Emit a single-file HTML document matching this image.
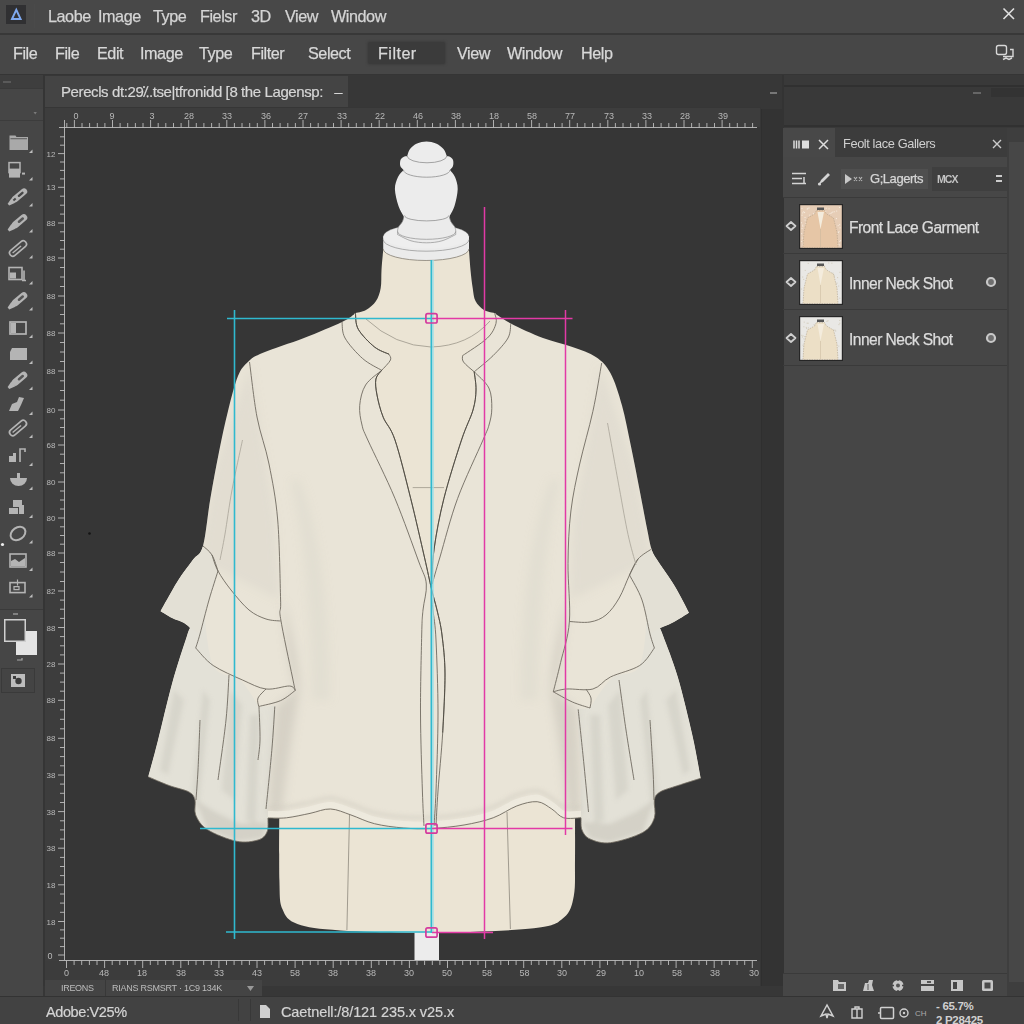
<!DOCTYPE html>
<html><head><meta charset="utf-8">
<style>
*{margin:0;padding:0;box-sizing:border-box}
html,body{width:1024px;height:1024px;overflow:hidden;background:#363636}
body{position:relative;-webkit-font-smoothing:antialiased;font-family:"Liberation Sans",sans-serif;color:#d2d2d2}
.abs{position:absolute}
.t{position:absolute;white-space:nowrap;line-height:1;will-change:transform}
#title{left:0;top:0;width:1024px;height:34px;background:#484848}
#menu{left:0;top:33px;width:1024px;height:42px;background:#474747;border-top:2px solid #383838;border-bottom:1px solid #353535}
#title .t{top:8px;font-size:16.2px;color:#d4d4d4;letter-spacing:-.45px;-webkit-text-stroke:.25px #d4d4d4}
#menu .t{top:10px;font-size:16.2px;color:#d8d8d8;letter-spacing:-.45px;-webkit-text-stroke:.25px #d8d8d8}
#tools{left:0;top:75px;width:43px;height:922px;background:#464646}
#tabbar{left:43px;top:75px;width:740px;height:34px;background:#373737}
#tab{left:45px;top:76px;width:303px;height:31px;background:#444}
#canvas{left:43px;top:107px;width:718px;height:879px;background:#363636}
#rightstrip{left:761px;top:109px;width:22px;height:888px;background:#333;border-left:1px solid #2f2f2f}
#panel{left:783px;top:75px;width:241px;height:922px;background:#464646}
#status{left:0;top:996px;width:1024px;height:28px;background:#424242;border-top:1px solid #333}
.rn{font-size:9px;fill:#b8b8b8;font-family:"Liberation Sans",sans-serif}
.ly{position:absolute;left:0;width:224px;height:56px;border-bottom:1px solid #3a3a3a}
.ly .t{left:66px;top:21.5px;font-size:15.6px;color:#dcdcdc;letter-spacing:-.55px;-webkit-text-stroke:.25px #dcdcdc}
</style></head><body>

<div id="title" class="abs">
 <div class="abs" style="left:6px;top:5px;width:20px;height:18.5px;background:#303032"></div>
 <svg class="abs" style="left:0;top:0" width="30" height="30"><path d="M12 19 L16.3 9.8 L20.6 19 Z" fill="none" stroke="#7ea8ee" stroke-width="1.9" stroke-linejoin="miter"/></svg>
 <div class="abs" style="left:34px;top:4px;width:1px;height:24px;background:#4a4a4a"></div>
 <span class="t" style="left:48px">Laobe</span><span class="t" style="left:98px">Image</span><span class="t" style="left:153px">Type</span><span class="t" style="left:200px">Fielsr</span><span class="t" style="left:251px">3D</span><span class="t" style="left:285px">View</span><span class="t" style="left:331px">Window</span>
 <svg class="abs" style="left:1002px;top:7px" width="14" height="14"><path d="M1.5 1.5 L12 12 M12 1.5 L1.5 12" stroke="#e0e0e0" stroke-width="1.6" fill="none"/></svg>
</div>
<div id="menu" class="abs">
 <div class="abs" style="left:368px;top:7px;width:77px;height:22px;background:#3b3b3b;border-radius:2px;box-shadow:0 0 2px 1px #3f3f3f"></div>
 <span class="t" style="left:13px">File</span><span class="t" style="left:55px">File</span><span class="t" style="left:97px">Edit</span><span class="t" style="left:140px">Image</span><span class="t" style="left:199px">Type</span><span class="t" style="left:251px">Filter</span><span class="t" style="left:308px">Select</span><span class="t" style="left:378px;letter-spacing:.45px">Filter</span><span class="t" style="left:457px">View</span><span class="t" style="left:507px">Window</span><span class="t" style="left:581px">Help</span>
 <svg class="abs" style="left:994px;top:8px" width="22" height="22"><rect x="2.5" y="2.5" width="10" height="9" rx="2" fill="none" stroke="#d8d8d8" stroke-width="1.4"/><path d="M9 13.5 h10 v-7 h-3 M9 16.5 l3 -1.5 l3 1.5 l3 -1.5" fill="none" stroke="#d8d8d8" stroke-width="1.4"/></svg>
</div>
<div id="tabbar" class="abs"></div>
<div id="tab" class="abs"><span class="t" style="left:16px;top:8px;font-size:15px;color:#d6d6d6;letter-spacing:-.4px;-webkit-text-stroke:.2px #d6d6d6">Perecls dt:29&#8274;.tse|tfronidd [8 the Lagensp:&nbsp;&nbsp; &ndash;</span></div>
<div id="canvas" class="abs"></div>
<div id="rightstrip" class="abs"></div>

<svg class="abs" style="left:0;top:0" width="1024" height="1024" viewBox="0 0 1024 1024">
<rect x="45" y="108" width="715" height="19" fill="#3d3d3d"/><rect x="45" y="108" width="19" height="872" fill="#3d3d3d"/><rect x="45" y="961" width="715" height="25" fill="#3c3c3c"/><rect x="43" y="75" width="2" height="922" fill="#353535"/>
<rect x="414.5" y="931" width="24.5" height="29" fill="#ececec"/>
<path d="M279.4 800.0 C279.4 813.3 278.9 861.8 279.4 880.0 C279.9 898.2 279.4 901.7 282.4 909.0 C285.4 916.3 287.7 920.4 297.4 924.0 C307.1 927.6 318.2 929.0 340.4 930.4 C362.6 931.8 398.5 933.0 430.7 932.6 C462.9 932.2 511.6 930.8 533.8 928.3 C556.0 925.8 557.2 922.9 563.9 917.5 C570.6 912.1 571.9 905.6 573.8 896.0 C575.6 886.4 574.8 876.0 575.0 860.0 C575.2 844.0 575.0 810.0 575.0 800.0 Z" fill="#ebe4d4"/>
<path d="M349.5 815 L346.9 930 M507 812 L510.4 929" stroke="#8d887c" stroke-width=".8" fill="none"/>
<path d="M383.3 249.0 C383.0 252.5 381.9 263.5 381.5 270.0 C381.1 276.5 381.6 282.8 380.7 288.0 C379.8 293.2 378.4 297.3 376.0 301.0 C373.6 304.7 369.6 307.9 366.0 310.0 C362.4 312.1 356.5 312.8 354.6 313.3 C354.6 327.8 354.6 385.6 354.6 400.0 C378.1 400.0 472.0 400.0 495.5 400.0 C495.5 385.6 495.5 327.8 495.5 313.3 C493.6 312.8 487.3 312.1 484.0 310.0 C480.7 307.9 477.4 304.7 475.5 301.0 C473.6 297.3 473.5 293.2 472.7 288.0 C471.9 282.8 471.1 276.5 470.5 270.0 C469.9 263.5 469.2 252.5 468.9 249.0 Z" fill="#ebe4d4"/>
<path d="M383.2 236.6 V248.9 A42.9 11.6 0 0 0 469 248.9 V236.6 Z" fill="#ebebeb"/>
<ellipse cx="426.1" cy="236.6" rx="42.9" ry="12" fill="#eeeeee"/>
<path d="M383.2 236.6 A42.9 12 0 0 1 469 236.6" fill="none" stroke="#8f8f8f" stroke-width=".5" opacity=".6"/>
<path d="M383.2 239.6 A42.9 11.6 0 0 0 469 239.6" fill="none" stroke="#8f8f8f" stroke-width=".7"/>
<path d="M383.2 248.9 A42.9 11.6 0 0 0 469 248.9" fill="none" stroke="#857f73" stroke-width=".8"/>
<path d="M404.4 215.0 C404.1 216.1 403.4 219.6 402.5 221.5 C401.6 223.4 399.6 225.1 398.8 226.5 C398.0 227.9 397.8 229.4 397.6 230.0 C397.6 230.8 397.6 233.8 397.6 234.6 C399.8 235.6 406.2 239.4 411.0 240.8 C415.8 242.2 421.4 242.8 426.6 242.8 C431.8 242.8 437.1 242.2 442.0 240.8 C446.9 239.4 453.4 235.6 455.7 234.6 C455.7 233.8 455.7 230.8 455.7 230.0 C455.5 229.4 455.3 227.9 454.5 226.5 C453.7 225.1 451.7 223.4 450.8 221.5 C449.9 219.6 449.2 216.1 448.9 215.0 Z" fill="#ebebeb" stroke="#8f8f8f" stroke-width=".7"/>
<path d="M397.6 231.6 A29 7.7 0 0 0 455.7 231.6" fill="none" stroke="#8f8f8f" stroke-width=".7"/>
<path d="M404.4 217.5 C403.4 215.6 400.1 210.8 398.5 206.0 C396.9 201.2 395.0 193.8 394.9 189.0 C394.8 184.2 396.6 180.2 398.0 177.0 C399.4 173.8 402.6 171.2 403.5 170.0 C403.0 169.3 400.8 167.7 400.3 166.0 C399.8 164.3 400.0 161.5 400.5 160.0 C401.0 158.5 402.4 157.7 403.5 157.0 C404.6 156.3 406.6 156.2 407.2 156.0 C407.7 154.8 408.4 151.1 410.0 149.0 C411.6 146.9 414.2 144.8 417.0 143.5 C419.8 142.2 423.3 141.5 426.5 141.5 C429.7 141.5 433.2 142.2 436.0 143.5 C438.8 144.8 441.7 146.9 443.5 149.0 C445.3 151.1 446.2 154.8 446.8 156.0 C447.4 156.2 449.2 156.3 450.2 157.0 C451.2 157.7 452.5 158.5 453.0 160.0 C453.5 161.5 453.5 164.3 453.0 166.0 C452.5 167.7 450.5 169.3 450.0 170.0 C450.8 171.2 453.7 173.8 455.0 177.0 C456.3 180.2 457.8 184.2 457.7 189.0 C457.6 193.8 456.0 201.2 454.5 206.0 C453.0 210.8 449.8 215.6 448.9 217.5 C446.9 218.1 440.7 220.2 437.0 221.0 C433.3 221.8 430.1 222.0 426.6 222.0 C423.1 222.0 419.7 221.8 416.0 221.0 C412.3 220.2 406.3 218.1 404.4 217.5 Z" fill="#ececec"/>
<path d="M407.2 156 A19.8 6.8 0 0 0 446.8 156 M403.5 170 A23.25 7.2 0 0 0 450 170 M404.6 215.5 A22 5.4 0 0 0 448.7 215.5" fill="none" stroke="#8f8f8f" stroke-width=".8"/>
<path d="M355.4 313.2 C353.2 314.7 350.6 317.9 342.0 322.0 C333.4 326.1 317.2 332.9 304.0 338.0 C290.8 343.1 272.3 348.8 263.0 352.7 C253.7 356.6 252.6 357.6 248.4 361.5 C244.2 365.4 241.4 367.8 238.0 376.0 C234.6 384.2 231.2 398.3 228.0 411.0 C224.8 423.7 221.9 437.3 219.0 452.0 C216.1 466.7 213.0 483.3 210.3 499.0 C207.6 514.7 205.9 535.8 203.0 546.0 C200.1 556.2 196.9 554.2 192.7 560.0 C188.5 565.8 183.4 572.0 178.0 580.5 C172.6 589.0 163.4 606.2 160.5 611.3 C162.4 612.4 168.1 616.0 172.0 618.0 C175.9 620.0 181.0 621.3 184.0 623.0 C187.0 624.7 189.0 627.2 190.0 628.0 C189.5 629.3 189.9 626.8 186.9 636.0 C183.9 645.2 177.1 665.4 172.2 683.0 C167.3 700.6 161.6 726.1 157.6 741.7 C153.6 757.3 149.8 770.9 148.2 776.8 C151.7 778.3 162.5 783.1 169.3 785.6 C176.1 788.1 184.7 789.6 189.0 792.0 C193.3 794.4 193.9 796.2 195.0 800.0 C196.1 803.8 193.6 810.1 195.7 815.0 C197.8 819.9 200.6 825.2 207.4 829.6 C214.2 834.0 228.3 839.6 236.7 841.3 C245.1 843.0 252.9 841.5 258.0 840.0 C263.1 838.5 265.3 835.7 267.0 832.0 C268.7 828.3 267.8 820.3 268.0 818.0 C271.1 818.0 279.5 818.6 286.5 817.8 C293.5 817.0 302.7 814.9 310.0 813.4 C317.3 811.9 323.7 808.7 330.5 809.0 C337.3 809.3 343.7 812.5 351.0 815.0 C358.3 817.5 365.6 821.5 374.4 823.7 C383.2 825.9 394.3 827.2 403.7 828.0 C413.1 828.8 420.9 829.0 431.0 828.5 C441.1 828.0 453.6 826.8 464.0 825.0 C474.4 823.2 484.4 821.0 493.2 817.8 C502.0 814.6 509.4 808.7 516.7 806.0 C524.0 803.3 531.4 801.2 537.2 801.7 C543.1 802.2 547.4 806.3 551.8 809.0 C556.2 811.7 558.7 816.3 563.6 817.8 C568.5 819.3 578.1 817.8 581.0 817.8 C581.2 819.8 580.5 826.5 582.0 830.0 C583.5 833.5 585.3 836.9 590.0 839.0 C594.7 841.1 601.6 843.8 610.4 842.7 C619.2 841.6 635.4 836.6 642.7 832.5 C650.0 828.4 652.5 823.2 654.4 817.8 C656.3 812.4 653.5 804.3 654.4 800.0 C655.3 795.7 656.1 794.4 660.0 792.0 C663.9 789.6 671.0 787.9 677.8 785.6 C684.6 783.3 696.9 779.5 700.7 778.3 C699.3 771.2 696.3 752.7 692.5 735.8 C688.7 718.9 682.7 693.6 677.8 677.0 C672.9 660.4 666.2 644.2 663.2 636.0 C660.2 627.8 660.5 629.3 660.0 628.0 C661.5 627.4 665.8 626.0 669.0 624.5 C672.2 623.0 675.7 621.0 679.0 619.0 C682.3 617.0 687.3 613.8 689.0 612.7 C686.7 608.3 680.3 595.2 675.0 586.4 C669.7 577.6 661.2 566.2 657.3 560.0 C653.4 553.8 653.2 554.2 651.5 549.0 C649.8 543.8 649.0 538.3 647.0 528.5 C645.0 518.7 642.4 504.1 639.7 490.4 C637.0 476.7 634.0 460.6 631.0 446.5 C628.0 432.4 625.4 417.8 622.0 405.5 C618.6 393.2 614.8 381.1 610.4 373.0 C606.0 364.9 602.1 361.4 595.8 357.0 C589.5 352.6 581.2 350.1 572.4 346.9 C563.6 343.7 553.3 341.9 543.0 338.0 C532.7 334.1 518.9 327.5 510.8 323.4 C502.8 319.3 497.4 314.9 494.7 313.2 Z" fill="#e9e4d7"/>
<defs><clipPath id="sil"><path d="M355.4 313.2 C353.2 314.7 350.6 317.9 342.0 322.0 C333.4 326.1 317.2 332.9 304.0 338.0 C290.8 343.1 272.3 348.8 263.0 352.7 C253.7 356.6 252.6 357.6 248.4 361.5 C244.2 365.4 241.4 367.8 238.0 376.0 C234.6 384.2 231.2 398.3 228.0 411.0 C224.8 423.7 221.9 437.3 219.0 452.0 C216.1 466.7 213.0 483.3 210.3 499.0 C207.6 514.7 205.9 535.8 203.0 546.0 C200.1 556.2 196.9 554.2 192.7 560.0 C188.5 565.8 183.4 572.0 178.0 580.5 C172.6 589.0 163.4 606.2 160.5 611.3 C162.4 612.4 168.1 616.0 172.0 618.0 C175.9 620.0 181.0 621.3 184.0 623.0 C187.0 624.7 189.0 627.2 190.0 628.0 C189.5 629.3 189.9 626.8 186.9 636.0 C183.9 645.2 177.1 665.4 172.2 683.0 C167.3 700.6 161.6 726.1 157.6 741.7 C153.6 757.3 149.8 770.9 148.2 776.8 C151.7 778.3 162.5 783.1 169.3 785.6 C176.1 788.1 184.7 789.6 189.0 792.0 C193.3 794.4 193.9 796.2 195.0 800.0 C196.1 803.8 193.6 810.1 195.7 815.0 C197.8 819.9 200.6 825.2 207.4 829.6 C214.2 834.0 228.3 839.6 236.7 841.3 C245.1 843.0 252.9 841.5 258.0 840.0 C263.1 838.5 265.3 835.7 267.0 832.0 C268.7 828.3 267.8 820.3 268.0 818.0 C271.1 818.0 279.5 818.6 286.5 817.8 C293.5 817.0 302.7 814.9 310.0 813.4 C317.3 811.9 323.7 808.7 330.5 809.0 C337.3 809.3 343.7 812.5 351.0 815.0 C358.3 817.5 365.6 821.5 374.4 823.7 C383.2 825.9 394.3 827.2 403.7 828.0 C413.1 828.8 420.9 829.0 431.0 828.5 C441.1 828.0 453.6 826.8 464.0 825.0 C474.4 823.2 484.4 821.0 493.2 817.8 C502.0 814.6 509.4 808.7 516.7 806.0 C524.0 803.3 531.4 801.2 537.2 801.7 C543.1 802.2 547.4 806.3 551.8 809.0 C556.2 811.7 558.7 816.3 563.6 817.8 C568.5 819.3 578.1 817.8 581.0 817.8 C581.2 819.8 580.5 826.5 582.0 830.0 C583.5 833.5 585.3 836.9 590.0 839.0 C594.7 841.1 601.6 843.8 610.4 842.7 C619.2 841.6 635.4 836.6 642.7 832.5 C650.0 828.4 652.5 823.2 654.4 817.8 C656.3 812.4 653.5 804.3 654.4 800.0 C655.3 795.7 656.1 794.4 660.0 792.0 C663.9 789.6 671.0 787.9 677.8 785.6 C684.6 783.3 696.9 779.5 700.7 778.3 C699.3 771.2 696.3 752.7 692.5 735.8 C688.7 718.9 682.7 693.6 677.8 677.0 C672.9 660.4 666.2 644.2 663.2 636.0 C660.2 627.8 660.5 629.3 660.0 628.0 C661.5 627.4 665.8 626.0 669.0 624.5 C672.2 623.0 675.7 621.0 679.0 619.0 C682.3 617.0 687.3 613.8 689.0 612.7 C686.7 608.3 680.3 595.2 675.0 586.4 C669.7 577.6 661.2 566.2 657.3 560.0 C653.4 553.8 653.2 554.2 651.5 549.0 C649.8 543.8 649.0 538.3 647.0 528.5 C645.0 518.7 642.4 504.1 639.7 490.4 C637.0 476.7 634.0 460.6 631.0 446.5 C628.0 432.4 625.4 417.8 622.0 405.5 C618.6 393.2 614.8 381.1 610.4 373.0 C606.0 364.9 602.1 361.4 595.8 357.0 C589.5 352.6 581.2 350.1 572.4 346.9 C563.6 343.7 553.3 341.9 543.0 338.0 C532.7 334.1 518.9 327.5 510.8 323.4 C502.8 319.3 497.4 314.9 494.7 313.2 Z"/></clipPath><filter id="bl" x="-20%" y="-20%" width="140%" height="140%"><feGaussianBlur stdDeviation="2.2"/></filter><filter id="bl2" x="-20%" y="-20%" width="140%" height="140%"><feGaussianBlur stdDeviation="4"/></filter></defs>
<g clip-path="url(#sil)">
<path d="M203.0 600.0 C200.8 604.7 192.7 622.0 190.0 628.0 C187.3 634.0 189.9 626.8 186.9 636.0 C183.9 645.2 177.1 665.4 172.2 683.0 C167.3 700.6 161.6 726.1 157.6 741.7 C153.6 757.3 149.8 770.9 148.2 776.8 C151.7 778.3 162.5 783.1 169.3 785.6 C176.1 788.1 184.7 789.6 189.0 792.0 C193.3 794.4 193.9 796.2 195.0 800.0 C196.1 803.8 193.6 810.1 195.7 815.0 C197.8 819.9 200.6 825.2 207.4 829.6 C214.2 834.0 228.3 839.6 236.7 841.3 C245.1 843.0 252.9 841.5 258.0 840.0 C263.1 838.5 265.3 835.7 267.0 832.0 C268.7 828.3 267.8 820.3 268.0 818.0 C268.7 808.3 270.7 778.7 272.0 760.0 C273.3 741.3 275.3 715.0 276.0 706.0 C273.1 706.1 261.6 706.4 258.7 706.5 C255.6 702.1 247.6 686.9 240.0 680.0 C232.4 673.1 219.2 678.3 213.0 665.0 C206.8 651.7 204.7 610.8 203.0 600.0 Z" fill="#e3e1d7"/>
<path d="M648.0 600.0 C650.0 604.7 657.5 622.0 660.0 628.0 C662.5 634.0 660.2 627.8 663.2 636.0 C666.2 644.2 672.9 660.4 677.8 677.0 C682.7 693.6 688.7 718.9 692.5 735.8 C696.3 752.7 699.3 771.2 700.7 778.3 C696.9 779.5 684.6 783.3 677.8 785.6 C671.0 787.9 663.9 789.6 660.0 792.0 C656.1 794.4 655.3 795.7 654.4 800.0 C653.5 804.3 656.3 812.4 654.4 817.8 C652.5 823.2 650.0 828.4 642.7 832.5 C635.4 836.6 619.2 841.6 610.4 842.7 C601.6 843.8 594.7 841.1 590.0 839.0 C585.3 836.9 583.5 833.5 582.0 830.0 C580.5 826.5 581.2 819.8 581.0 817.8 C580.8 808.2 580.7 778.1 580.0 760.0 C579.3 741.9 577.5 717.5 577.0 709.0 C579.2 708.8 587.8 708.2 590.0 708.0 C593.7 703.0 603.7 685.2 612.0 678.0 C620.3 670.8 634.0 678.0 640.0 665.0 C646.0 652.0 646.7 610.8 648.0 600.0 Z" fill="#e3e1d7"/>
<g filter="url(#bl)">
<path d="M203 690 L192 795 L198 812 L210 700Z M230 690 L222 790 L234 800 L242 705Z M174 690 L160 770 L168 775 L184 700Z M250 715 L246 820 L256 825 L260 715Z" fill="#c4c2b7" opacity=".38"/>
<path d="M647 690 L658 795 L652 812 L640 700Z M620 690 L628 790 L616 800 L608 705Z M676 690 L690 770 L683 775 L666 700Z M600 715 L604 820 L594 825 L590 715Z" fill="#c4c2b7" opacity=".38"/>
<path d="M196 800 L207 829 L237 841 L262 838 L268 822 L240 824 L215 812Z" fill="#c9c7bc" opacity=".6"/>
<path d="M654 800 L643 832 L610 842 L590 838 L582 822 L610 824 L636 812Z" fill="#c9c7bc" opacity=".6"/>
</g>
<g filter="url(#bl2)">
<path d="M283 600 Q305 680 298 700 Q288 760 282 812 L268 818 Q270 760 276 706 L295 690 Q285 650 283 600Z" fill="#c6c3b8" opacity=".55"/>
<path d="M567 600 Q545 680 552 700 Q562 760 568 812 L581 818 Q580 760 577 709 L554 690 Q565 650 567 600Z" fill="#c6c3b8" opacity=".55"/>
<path d="M300 480 Q330 560 330 700 L312 700 Q310 560 290 480Z" fill="#d8d4c8" opacity=".35"/>
<path d="M550 480 Q520 560 520 700 L538 700 Q540 560 560 480Z" fill="#d8d4c8" opacity=".35"/>
</g>
<g filter="url(#bl)"><path d="M268.0 818.0 C271.1 818.0 279.5 818.6 286.5 817.8 C293.5 817.0 302.7 814.9 310.0 813.4 C317.3 811.9 323.7 808.7 330.5 809.0 C337.3 809.3 343.7 812.5 351.0 815.0 C358.3 817.5 365.6 821.5 374.4 823.7 C383.2 825.9 394.3 827.2 403.7 828.0 C413.1 828.8 420.9 829.0 431.0 828.5 C441.1 828.0 453.6 826.8 464.0 825.0 C474.4 823.2 484.4 821.0 493.2 817.8 C502.0 814.6 509.4 808.7 516.7 806.0 C524.0 803.3 531.4 801.2 537.2 801.7 C543.1 802.2 547.4 806.3 551.8 809.0 C556.2 811.7 558.7 816.3 563.6 817.8 C568.5 819.3 578.1 817.8 581.0 817.8 " transform="translate(0,-11)" fill="none" stroke="#d2cec2" stroke-width="3" opacity=".7"/></g>
<path d="M268.0 818.0 C271.1 818.0 279.5 818.6 286.5 817.8 C293.5 817.0 302.7 814.9 310.0 813.4 C317.3 811.9 323.7 808.7 330.5 809.0 C337.3 809.3 343.7 812.5 351.0 815.0 C358.3 817.5 365.6 821.5 374.4 823.7 C383.2 825.9 394.3 827.2 403.7 828.0 C413.1 828.8 420.9 829.0 431.0 828.5 C441.1 828.0 453.6 826.8 464.0 825.0 C474.4 823.2 484.4 821.0 493.2 817.8 C502.0 814.6 509.4 808.7 516.7 806.0 C524.0 803.3 531.4 801.2 537.2 801.7 C543.1 802.2 547.4 806.3 551.8 809.0 C556.2 811.7 558.7 816.3 563.6 817.8 C568.5 819.3 578.1 817.8 581.0 817.8 " transform="translate(0,-4)" fill="none" stroke="#efebe0" stroke-width="6" opacity=".8"/>
<g filter="url(#bl2)"><path d="M250 365 L215 470 L200 560 L280 600 L275 520 L262 440 Z M600 365 L635 470 L652 560 L570 600 L573 520 L588 440 Z" fill="#d9d5c9" opacity=".45"/></g>
<path d="M203.0 546.0 C201.3 548.3 196.9 554.2 192.7 560.0 C188.5 565.8 183.4 572.0 178.0 580.5 C172.6 589.0 163.4 606.2 160.5 611.3 C162.4 612.4 168.1 616.0 172.0 618.0 C175.9 620.0 181.0 621.3 184.0 623.0 C187.0 624.7 189.0 627.2 190.0 628.0 C191.7 629.0 198.3 633.0 200.0 634.0 C201.5 628.3 206.0 610.5 209.0 600.0 C212.0 589.5 217.5 578.5 218.0 571.0 C218.5 563.5 214.5 559.2 212.0 555.0 C209.5 550.8 204.5 547.5 203.0 546.0 Z" fill="#e3e0d5"/>
<path d="M651.5 549.0 C652.5 550.8 653.4 553.8 657.3 560.0 C661.2 566.2 669.7 577.6 675.0 586.4 C680.3 595.2 686.7 608.3 689.0 612.7 C687.3 613.8 682.3 617.0 679.0 619.0 C675.7 621.0 672.2 623.0 669.0 624.5 C665.8 626.0 661.5 627.4 660.0 628.0 C658.3 629.0 651.7 633.0 650.0 634.0 C648.7 628.3 645.4 609.8 642.0 600.0 C638.6 590.2 630.2 581.8 629.5 575.0 C628.8 568.2 634.3 563.3 638.0 559.0 C641.7 554.7 649.2 550.7 651.5 549.0 Z" fill="#e3e0d5"/>
</g>
<path d="M355.4 314.6 C355.9 317.1 355.1 323.9 358.3 329.3 C361.5 334.7 369.3 342.8 374.4 346.9 C379.5 351.0 386.6 353.0 389.0 354.2 C389.2 355.2 391.7 357.3 390.5 360.0 C389.3 362.7 383.2 368.6 381.7 370.3 C380.7 371.8 376.7 374.9 375.9 379.0 C375.1 383.1 375.8 388.6 377.0 395.0 C378.2 401.4 380.2 409.7 383.2 417.2 C386.2 424.7 390.4 426.4 395.0 440.0 C399.6 453.6 405.8 479.0 410.7 498.5 C415.6 518.0 420.9 541.9 424.4 557.0 C427.9 572.1 430.3 583.7 431.5 589.0 C431.9 582.3 432.0 564.1 434.1 549.0 C436.2 533.9 439.3 516.7 443.9 498.5 C448.5 480.3 456.6 454.8 461.5 440.0 C466.4 425.2 470.6 418.3 473.0 410.0 C475.4 401.7 475.8 396.4 476.0 390.0 C476.2 383.6 474.5 374.8 474.2 371.8 C472.2 370.0 464.4 363.7 462.5 361.0 C460.6 358.3 462.5 356.6 462.5 355.7 C465.1 354.1 473.4 349.6 478.0 346.0 C482.6 342.4 487.0 337.8 490.0 334.0 C493.0 330.2 495.2 326.9 496.0 323.4 C496.8 319.9 494.9 314.9 494.7 313.2 Z" fill="#ebe4d4"/>
<path d="M366 319 Q395 346 431 347 Q468 346 490 321" fill="none" stroke="#9c978a" stroke-width=".8"/>
<path d="M412.7 487.6 H444" fill="none" stroke="#9c978a" stroke-width=".8"/>
<path d="M342.0 322.0 C342.5 324.7 341.6 331.9 345.0 338.0 C348.4 344.1 356.6 353.2 362.7 358.6 C368.8 364.0 378.5 368.4 381.7 370.3  M355.4 313.2 C355.9 315.9 355.1 323.7 358.3 329.3 C361.5 334.9 369.3 342.8 374.4 346.9 C379.5 351.0 386.6 353.0 389.0 354.2 C389.2 355.2 391.7 357.3 390.5 360.0 C389.3 362.7 383.2 368.6 381.7 370.3  M381.7 370.3 C380.7 371.8 376.7 374.9 375.9 379.0 C375.1 383.1 375.8 388.6 377.0 395.0 C378.2 401.4 380.2 409.7 383.2 417.2 C386.2 424.7 390.4 426.4 395.0 440.0 C399.6 453.6 405.8 479.0 410.7 498.5 C415.6 518.0 420.9 541.9 424.4 557.0 C427.9 572.1 429.4 580.2 431.5 589.0 C433.6 597.8 435.2 602.3 437.0 610.0 C438.8 617.7 440.7 624.3 442.0 635.0 C443.3 645.7 444.9 657.7 445.0 674.0 C445.1 690.3 443.9 713.2 442.7 732.7 C441.5 752.2 439.1 775.5 438.0 791.0 C436.9 806.5 436.3 820.2 436.0 826.0  M381.7 370.3 C379.0 372.8 369.3 379.1 365.6 385.0 C361.9 390.9 360.3 398.8 359.7 405.5 C359.1 412.2 360.6 419.2 362.0 425.0 C363.4 430.8 362.3 427.8 367.8 440.0 C373.3 452.2 386.6 478.3 395.0 498.5 C403.4 518.7 413.3 546.8 418.5 561.0 C423.7 575.2 425.6 575.8 426.3 584.0 C427.1 592.2 423.8 601.5 423.0 610.0 C422.2 618.5 422.1 617.8 421.7 635.0 C421.3 652.2 420.4 687.0 420.5 713.0 C420.6 739.0 421.8 772.2 422.4 791.0 C423.0 809.8 423.7 820.2 424.0 826.0  M510.8 323.4 C510.3 325.8 511.0 332.6 508.0 338.0 C505.0 343.4 498.6 350.1 493.0 355.7 C487.4 361.3 477.3 369.1 474.2 371.8  M494.7 313.2 C494.9 314.9 497.2 319.3 496.0 323.4 C494.8 327.5 493.0 332.6 487.4 338.0 C481.8 343.4 466.6 352.8 462.5 355.7 C462.7 356.8 461.6 359.3 463.5 362.0 C465.4 364.7 472.4 370.2 474.2 371.8  M474.2 371.8 C474.5 374.8 476.2 383.6 476.0 390.0 C475.8 396.4 475.4 401.7 473.0 410.0 C470.6 418.3 466.4 425.2 461.5 440.0 C456.6 454.8 448.5 480.3 443.9 498.5 C439.3 516.7 436.2 533.9 434.1 549.0 C432.0 564.1 431.7 578.8 431.5 589.0 C431.3 599.2 432.2 601.5 433.0 610.0 C433.8 618.5 435.2 622.8 436.0 640.0 C436.8 657.2 438.0 687.8 438.0 713.0 C438.0 738.2 436.7 772.2 436.0 791.0 C435.3 809.8 434.3 820.2 434.0 826.0  M474.2 371.8 C476.6 374.5 486.0 381.9 488.9 388.0 C491.8 394.1 491.8 402.2 491.8 408.4 C491.8 414.6 490.5 419.7 489.0 425.0 C487.5 430.3 488.2 427.8 483.0 440.0 C477.8 452.2 464.8 479.0 457.6 498.5 C450.4 518.0 444.2 542.8 440.0 557.0 C435.8 571.2 433.5 579.5 432.2 584.0  M249.5 362.0 C250.8 371.2 253.8 400.0 257.0 417.0 C260.2 434.0 265.6 446.8 269.0 464.0 C272.4 481.2 275.8 497.3 277.7 520.0 C279.6 542.7 280.1 583.6 280.6 600.0 C281.1 616.4 278.6 605.8 280.6 618.6 C282.6 631.4 289.9 665.0 292.4 677.0 C294.8 689.0 294.8 688.2 295.3 690.4  M601.7 363.0 C600.2 371.1 596.6 394.5 592.9 411.3 C589.2 428.1 583.4 447.4 579.7 464.0 C576.0 480.6 572.9 494.4 570.9 511.0 C568.9 527.6 568.2 545.3 568.0 563.7 C567.8 582.1 570.6 605.0 569.4 621.5 C568.2 638.0 563.3 650.8 560.6 662.5 C557.9 674.2 554.5 686.9 553.3 691.8  M203.0 546.0 C204.5 547.5 209.5 550.8 212.0 555.0 C214.5 559.2 217.0 568.3 218.0 571.0 C216.5 575.8 212.0 589.5 209.0 600.0 C206.0 610.5 202.2 626.0 200.0 634.0 C197.8 642.0 196.4 645.7 195.7 648.0 C198.6 650.9 205.4 660.2 213.2 665.5 C221.0 670.8 233.7 676.1 242.5 680.0 C251.3 683.9 258.2 688.0 266.0 689.0 C273.8 690.0 284.5 685.8 289.4 686.0 C294.3 686.2 294.3 689.7 295.3 690.4 C292.9 692.1 286.7 697.9 280.6 700.6 C274.5 703.3 262.4 705.5 258.7 706.5 C258.6 705.1 256.8 700.9 258.0 698.0 C259.2 695.1 264.7 690.5 266.0 689.0  M651.5 549.0 C649.2 550.7 641.7 554.7 638.0 559.0 C634.3 563.3 630.9 572.3 629.5 575.0 C631.6 579.2 638.6 590.2 642.0 600.0 C645.4 609.8 647.9 626.0 650.0 634.0 C652.1 642.0 653.7 645.7 654.4 648.0 C652.0 650.9 647.0 660.7 639.7 665.5 C632.4 670.3 618.2 673.1 610.4 677.0 C602.6 680.9 600.2 687.0 592.9 689.0 C585.6 691.0 573.1 688.5 566.5 689.0 C559.9 689.5 555.5 691.3 553.3 691.8 C556.5 693.5 566.3 699.3 572.4 702.0 C578.5 704.7 587.1 707.0 590.0 708.0 C590.2 706.3 591.7 701.2 591.0 698.0 C590.3 694.8 586.8 690.5 586.0 689.0  M212.0 555.0 C213.0 557.7 214.8 565.2 218.0 571.0 C221.2 576.8 225.8 583.5 231.0 590.0 C236.2 596.5 243.2 605.2 249.0 610.0 C254.8 614.8 260.7 617.2 266.0 619.0 C271.3 620.8 278.2 620.7 280.6 621.0  M638.0 559.0 C636.6 561.7 632.6 568.5 629.5 575.0 C626.4 581.5 623.1 591.3 619.2 598.0 C615.3 604.7 610.9 611.0 606.0 615.0 C601.1 619.0 596.1 620.9 590.0 622.0 C583.9 623.1 572.8 621.6 569.4 621.5  M268.0 818.0 C271.1 818.0 279.5 818.6 286.5 817.8 C293.5 817.0 302.7 814.9 310.0 813.4 C317.3 811.9 323.7 808.7 330.5 809.0 C337.3 809.3 343.7 812.5 351.0 815.0 C358.3 817.5 365.6 821.5 374.4 823.7 C383.2 825.9 394.3 827.2 403.7 828.0 C413.1 828.8 420.9 829.0 431.0 828.5 C441.1 828.0 453.6 826.8 464.0 825.0 C474.4 823.2 484.4 821.0 493.2 817.8 C502.0 814.6 509.4 808.7 516.7 806.0 C524.0 803.3 531.4 801.2 537.2 801.7 C543.1 802.2 547.4 806.3 551.8 809.0 C556.2 811.7 558.7 816.3 563.6 817.8 C568.5 819.3 578.1 817.8 581.0 817.8  M274.8 706.5 C274.3 713.8 273.3 733.3 271.8 750.4 C270.3 767.5 267.0 799.2 266.0 809.0  M578.2 709.4 C579.2 718.7 582.3 747.9 584.0 765.0 C585.7 782.1 587.8 804.2 588.5 812.0  M148.2 776.8 C151.7 778.3 162.5 783.1 169.3 785.6 C176.1 788.1 184.7 789.6 189.0 792.0 C193.3 794.4 193.9 796.2 195.0 800.0 C196.1 803.8 193.6 810.1 195.7 815.0 C197.8 819.9 200.6 825.2 207.4 829.6 C214.2 834.0 228.3 839.6 236.7 841.3 C245.1 843.0 252.9 841.5 258.0 840.0 C263.1 838.5 265.3 835.7 267.0 832.0 C268.7 828.3 267.8 820.3 268.0 818.0  M581.0 817.8 C581.2 819.8 580.5 826.5 582.0 830.0 C583.5 833.5 585.3 836.9 590.0 839.0 C594.7 841.1 601.6 843.8 610.4 842.7 C619.2 841.6 635.4 836.6 642.7 832.5 C650.0 828.4 652.5 823.2 654.4 817.8 C656.3 812.4 653.5 804.3 654.4 800.0 C655.3 795.7 656.1 794.4 660.0 792.0 C663.9 789.6 671.0 787.9 677.8 785.6 C684.6 783.3 696.9 779.5 700.7 778.3  M229.0 675.0 C228.5 682.5 227.8 702.5 226.0 720.0 C224.2 737.5 219.3 770.0 218.0 780.0  M259.0 707.0 C259.2 712.5 260.2 731.2 260.0 740.0 C259.8 748.8 258.3 756.7 258.0 760.0  M200.0 720.0 C199.7 728.3 198.7 756.7 198.0 770.0 C197.3 783.3 196.3 795.0 196.0 800.0  M619.0 680.0 C620.2 688.3 623.5 713.3 626.0 730.0 C628.5 746.7 632.7 771.7 634.0 780.0  M650.0 720.0 C650.5 728.3 652.3 756.7 653.0 770.0 C653.7 783.3 653.8 795.0 654.0 800.0 " fill="none" stroke="#6f6a60" stroke-width=".9" stroke-linejoin="round"/>
<path d="M242.5 440.0 C240.8 448.3 234.9 474.3 232.0 490.0 C229.1 505.7 227.0 522.3 225.0 534.0 C223.0 545.7 220.8 555.7 220.0 560.0  M607.5 423.0 C609.5 433.8 615.8 468.9 619.2 487.5 C622.6 506.1 625.2 521.5 628.0 534.4 C630.8 547.3 634.7 559.9 636.0 565.0 " fill="none" stroke="#a8a398" stroke-width=".8"/>
<path d="M381.7 370.3 C380.7 371.8 376.7 374.9 375.9 379.0 C375.1 383.1 375.8 388.6 377.0 395.0 C378.2 401.4 380.2 409.7 383.2 417.2 C386.2 424.7 390.4 426.4 395.0 440.0 C399.6 453.6 405.8 479.0 410.7 498.5 C415.6 518.0 420.9 541.9 424.4 557.0 C427.9 572.1 429.4 580.2 431.5 589.0 C433.6 597.8 435.2 602.3 437.0 610.0 C438.8 617.7 440.7 624.3 442.0 635.0 C443.3 645.7 444.9 657.7 445.0 674.0 C445.1 690.3 443.1 722.9 442.7 732.7  M355.4 313.2 C355.9 315.9 355.1 323.7 358.3 329.3 C361.5 334.9 369.3 342.8 374.4 346.9 C379.5 351.0 386.6 353.0 389.0 354.2  M474.2 371.8 C474.5 374.8 476.2 383.6 476.0 390.0 C475.8 396.4 475.4 401.7 473.0 410.0 C470.6 418.3 466.4 425.2 461.5 440.0 C456.6 454.8 448.5 480.3 443.9 498.5 C439.3 516.7 436.2 533.9 434.1 549.0 C432.0 564.1 431.9 582.3 431.5 589.0 " fill="none" stroke="#4c4840" stroke-width=".9"/>
<path d="M433 260 V933" stroke="#9fe0e8" stroke-width="1.6" fill="none" opacity=".9"/>
<path d="M234.5 310 V939 M227 318.5 H431 M431.3 260 V933 M200 828.5 H431 M226 932 H431" stroke="#2fb9cf" stroke-width="1.6" fill="none"/>
<path d="M484.5 207 V939 M565.5 310 V835 M432 318.5 H572.5 M432 828.5 H572.5 M432 932.5 H493" stroke="#e23aa6" stroke-width="1.5" fill="none"/>
<rect x="425.9" y="313.6" width="11.2" height="9.4" rx="1.8" fill="none" stroke="#d43a9e" stroke-width="1.7"/>
<rect x="425.9" y="823.8" width="11.2" height="9.4" rx="1.8" fill="none" stroke="#d43a9e" stroke-width="1.7"/>
<rect x="425.9" y="927.8" width="11.2" height="9.4" rx="1.8" fill="none" stroke="#d43a9e" stroke-width="1.7"/>
<circle cx="89.5" cy="533.5" r="1.3" fill="#141414"/>
<path d="M59 127.5 H757 M66.8 127.5 v-4.5 M74.4 127.5 v-7.5 M82.0 127.5 v-4.5 M89.6 127.5 v-4.5 M97.3 127.5 v-4.5 M104.9 127.5 v-4.5 M112.5 127.5 v-7.5 M120.1 127.5 v-4.5 M127.7 127.5 v-4.5 M135.4 127.5 v-4.5 M143.0 127.5 v-4.5 M150.6 127.5 v-7.5 M158.2 127.5 v-4.5 M165.8 127.5 v-4.5 M173.5 127.5 v-4.5 M181.1 127.5 v-4.5 M188.7 127.5 v-7.5 M196.3 127.5 v-4.5 M203.9 127.5 v-4.5 M211.6 127.5 v-4.5 M219.2 127.5 v-4.5 M226.8 127.5 v-7.5 M234.4 127.5 v-4.5 M242.0 127.5 v-4.5 M249.7 127.5 v-4.5 M257.3 127.5 v-4.5 M264.9 127.5 v-7.5 M272.5 127.5 v-4.5 M280.1 127.5 v-4.5 M287.8 127.5 v-4.5 M295.4 127.5 v-4.5 M303.0 127.5 v-7.5 M310.6 127.5 v-4.5 M318.2 127.5 v-4.5 M325.9 127.5 v-4.5 M333.5 127.5 v-4.5 M341.1 127.5 v-7.5 M348.7 127.5 v-4.5 M356.3 127.5 v-4.5 M364.0 127.5 v-4.5 M371.6 127.5 v-4.5 M379.2 127.5 v-7.5 M386.8 127.5 v-4.5 M394.4 127.5 v-4.5 M402.1 127.5 v-4.5 M409.7 127.5 v-4.5 M417.3 127.5 v-7.5 M424.9 127.5 v-4.5 M432.5 127.5 v-4.5 M440.2 127.5 v-4.5 M447.8 127.5 v-4.5 M455.4 127.5 v-7.5 M463.0 127.5 v-4.5 M470.6 127.5 v-4.5 M478.3 127.5 v-4.5 M485.9 127.5 v-4.5 M493.5 127.5 v-7.5 M501.1 127.5 v-4.5 M508.7 127.5 v-4.5 M516.4 127.5 v-4.5 M524.0 127.5 v-4.5 M531.6 127.5 v-7.5 M539.2 127.5 v-4.5 M546.8 127.5 v-4.5 M554.5 127.5 v-4.5 M562.1 127.5 v-4.5 M569.7 127.5 v-7.5 M577.3 127.5 v-4.5 M584.9 127.5 v-4.5 M592.6 127.5 v-4.5 M600.2 127.5 v-4.5 M607.8 127.5 v-7.5 M615.4 127.5 v-4.5 M623.0 127.5 v-4.5 M630.7 127.5 v-4.5 M638.3 127.5 v-4.5 M645.9 127.5 v-7.5 M653.5 127.5 v-4.5 M661.1 127.5 v-4.5 M668.8 127.5 v-4.5 M676.4 127.5 v-4.5 M684.0 127.5 v-7.5 M691.6 127.5 v-4.5 M699.2 127.5 v-4.5 M706.9 127.5 v-4.5 M714.5 127.5 v-4.5 M722.1 127.5 v-7.5 M729.7 127.5 v-4.5 M737.3 127.5 v-4.5 M745.0 127.5 v-4.5 M752.6 127.5 v-4.5 M64.5 120 V960 M64.5 153.6 h-6.5 M64.5 162.0 h-4.5 M64.5 170.4 h-4.5 M64.5 178.9 h-4.5 M64.5 187.3 h-6.5 M64.5 196.2 h-4.5 M64.5 205.2 h-4.5 M64.5 214.1 h-4.5 M64.5 223.0 h-6.5 M64.5 231.8 h-4.5 M64.5 240.5 h-4.5 M64.5 249.2 h-4.5 M64.5 258.0 h-6.5 M64.5 267.5 h-4.5 M64.5 277.0 h-4.5 M64.5 286.5 h-4.5 M64.5 296.0 h-6.5 M64.5 305.2 h-4.5 M64.5 314.5 h-4.5 M64.5 323.8 h-4.5 M64.5 333.0 h-6.5 M64.5 342.5 h-4.5 M64.5 352.0 h-4.5 M64.5 361.5 h-4.5 M64.5 371.0 h-6.5 M64.5 380.8 h-4.5 M64.5 390.5 h-4.5 M64.5 400.2 h-4.5 M64.5 410.0 h-6.5 M64.5 418.8 h-4.5 M64.5 427.5 h-4.5 M64.5 436.2 h-4.5 M64.5 445.0 h-6.5 M64.5 454.2 h-4.5 M64.5 463.5 h-4.5 M64.5 472.8 h-4.5 M64.5 482.0 h-6.5 M64.5 491.0 h-4.5 M64.5 500.0 h-4.5 M64.5 509.0 h-4.5 M64.5 518.0 h-6.5 M64.5 526.8 h-4.5 M64.5 535.5 h-4.5 M64.5 544.2 h-4.5 M64.5 553.0 h-6.5 M64.5 562.5 h-4.5 M64.5 572.0 h-4.5 M64.5 581.5 h-4.5 M64.5 591.0 h-6.5 M64.5 600.1 h-4.5 M64.5 609.2 h-4.5 M64.5 618.4 h-4.5 M64.5 627.5 h-6.5 M64.5 636.6 h-4.5 M64.5 645.8 h-4.5 M64.5 654.9 h-4.5 M64.5 664.0 h-6.5 M64.5 673.1 h-4.5 M64.5 682.1 h-4.5 M64.5 691.2 h-4.5 M64.5 700.3 h-6.5 M64.5 709.8 h-4.5 M64.5 719.3 h-4.5 M64.5 728.8 h-4.5 M64.5 738.3 h-6.5 M64.5 747.5 h-4.5 M64.5 756.6 h-4.5 M64.5 765.8 h-4.5 M64.5 775.0 h-6.5 M64.5 784.1 h-4.5 M64.5 793.3 h-4.5 M64.5 802.5 h-4.5 M64.5 811.6 h-6.5 M64.5 820.8 h-4.5 M64.5 829.9 h-4.5 M64.5 839.1 h-4.5 M64.5 848.2 h-6.5 M64.5 857.4 h-4.5 M64.5 866.5 h-4.5 M64.5 875.6 h-4.5 M64.5 884.8 h-6.5 M64.5 894.0 h-4.5 M64.5 903.1 h-4.5 M64.5 912.3 h-4.5 M64.5 921.5 h-6.5 M64.5 929.9 h-4.5 M64.5 938.2 h-4.5 M64.5 946.6 h-4.5 M64.5 955.0 h-6.5 M64.5 136.8 h-4.5 M64.5 145.2 h-4.5 M59 960.5 H757 M66.5 960.5 v7.5 M74.1 960.5 v4.5 M81.7 960.5 v4.5 M89.4 960.5 v4.5 M97.0 960.5 v4.5 M104.6 960.5 v7.5 M112.2 960.5 v4.5 M119.8 960.5 v4.5 M127.5 960.5 v4.5 M135.1 960.5 v4.5 M142.7 960.5 v7.5 M150.3 960.5 v4.5 M157.9 960.5 v4.5 M165.6 960.5 v4.5 M173.2 960.5 v4.5 M180.8 960.5 v7.5 M188.4 960.5 v4.5 M196.0 960.5 v4.5 M203.7 960.5 v4.5 M211.3 960.5 v4.5 M218.9 960.5 v7.5 M226.5 960.5 v4.5 M234.1 960.5 v4.5 M241.8 960.5 v4.5 M249.4 960.5 v4.5 M257.0 960.5 v7.5 M264.6 960.5 v4.5 M272.2 960.5 v4.5 M279.9 960.5 v4.5 M287.5 960.5 v4.5 M295.1 960.5 v7.5 M302.7 960.5 v4.5 M310.3 960.5 v4.5 M318.0 960.5 v4.5 M325.6 960.5 v4.5 M333.2 960.5 v7.5 M340.8 960.5 v4.5 M348.4 960.5 v4.5 M356.1 960.5 v4.5 M363.7 960.5 v4.5 M371.3 960.5 v7.5 M378.9 960.5 v4.5 M386.5 960.5 v4.5 M394.2 960.5 v4.5 M401.8 960.5 v4.5 M409.4 960.5 v7.5 M417.0 960.5 v4.5 M424.6 960.5 v4.5 M432.3 960.5 v4.5 M439.9 960.5 v4.5 M447.5 960.5 v7.5 M455.1 960.5 v4.5 M462.7 960.5 v4.5 M470.4 960.5 v4.5 M478.0 960.5 v4.5 M485.6 960.5 v7.5 M493.2 960.5 v4.5 M500.8 960.5 v4.5 M508.5 960.5 v4.5 M516.1 960.5 v4.5 M523.7 960.5 v7.5 M531.3 960.5 v4.5 M538.9 960.5 v4.5 M546.6 960.5 v4.5 M554.2 960.5 v4.5 M561.8 960.5 v7.5 M569.4 960.5 v4.5 M577.0 960.5 v4.5 M584.7 960.5 v4.5 M592.3 960.5 v4.5 M599.9 960.5 v7.5 M607.5 960.5 v4.5 M615.1 960.5 v4.5 M622.8 960.5 v4.5 M630.4 960.5 v4.5 M638.0 960.5 v7.5 M645.6 960.5 v4.5 M653.2 960.5 v4.5 M660.9 960.5 v4.5 M668.5 960.5 v4.5 M676.1 960.5 v7.5 M683.7 960.5 v4.5 M691.3 960.5 v4.5 M699.0 960.5 v4.5 M706.6 960.5 v4.5 M714.2 960.5 v7.5 M721.8 960.5 v4.5 M729.4 960.5 v4.5 M737.1 960.5 v4.5 M744.7 960.5 v4.5 M752.3 960.5 v7.5" stroke="#c4c4c4" stroke-width="1" fill="none" opacity=".85"/>
<text class="rn" x="76" y="118.5" text-anchor="middle">0</text>
<text class="rn" x="112" y="118.5" text-anchor="middle">9</text>
<text class="rn" x="152" y="118.5" text-anchor="middle">3</text>
<text class="rn" x="189" y="118.5" text-anchor="middle">28</text>
<text class="rn" x="227" y="118.5" text-anchor="middle">33</text>
<text class="rn" x="266" y="118.5" text-anchor="middle">36</text>
<text class="rn" x="303" y="118.5" text-anchor="middle">27</text>
<text class="rn" x="342" y="118.5" text-anchor="middle">33</text>
<text class="rn" x="380" y="118.5" text-anchor="middle">22</text>
<text class="rn" x="418" y="118.5" text-anchor="middle">46</text>
<text class="rn" x="456" y="118.5" text-anchor="middle">38</text>
<text class="rn" x="494" y="118.5" text-anchor="middle">18</text>
<text class="rn" x="532" y="118.5" text-anchor="middle">58</text>
<text class="rn" x="570" y="118.5" text-anchor="middle">77</text>
<text class="rn" x="609" y="118.5" text-anchor="middle">73</text>
<text class="rn" x="647" y="118.5" text-anchor="middle">33</text>
<text class="rn" x="685" y="118.5" text-anchor="middle">28</text>
<text class="rn" x="723" y="118.5" text-anchor="middle">39</text>
<text class="rn" x="66.5" y="976" text-anchor="middle">0</text>
<text class="rn" x="104" y="976" text-anchor="middle">48</text>
<text class="rn" x="142" y="976" text-anchor="middle">18</text>
<text class="rn" x="181" y="976" text-anchor="middle">38</text>
<text class="rn" x="219" y="976" text-anchor="middle">33</text>
<text class="rn" x="257" y="976" text-anchor="middle">43</text>
<text class="rn" x="295" y="976" text-anchor="middle">58</text>
<text class="rn" x="333" y="976" text-anchor="middle">38</text>
<text class="rn" x="371" y="976" text-anchor="middle">38</text>
<text class="rn" x="409" y="976" text-anchor="middle">30</text>
<text class="rn" x="447" y="976" text-anchor="middle">50</text>
<text class="rn" x="487" y="976" text-anchor="middle">58</text>
<text class="rn" x="524.5" y="976" text-anchor="middle">58</text>
<text class="rn" x="562" y="976" text-anchor="middle">30</text>
<text class="rn" x="601" y="976" text-anchor="middle">29</text>
<text class="rn" x="639" y="976" text-anchor="middle">10</text>
<text class="rn" x="677" y="976" text-anchor="middle">58</text>
<text class="rn" x="715" y="976" text-anchor="middle">38</text>
<text class="rn" x="754" y="976" text-anchor="middle">30</text>
<text class="rn" x="51" y="156.6" text-anchor="middle" style="font-size:8px">12</text>
<text class="rn" x="51" y="190.3" text-anchor="middle" style="font-size:8px">13</text>
<text class="rn" x="51" y="226.0" text-anchor="middle" style="font-size:8px">88</text>
<text class="rn" x="51" y="261.0" text-anchor="middle" style="font-size:8px">88</text>
<text class="rn" x="51" y="299.0" text-anchor="middle" style="font-size:8px">88</text>
<text class="rn" x="51" y="336.0" text-anchor="middle" style="font-size:8px">88</text>
<text class="rn" x="51" y="374.0" text-anchor="middle" style="font-size:8px">88</text>
<text class="rn" x="51" y="413.0" text-anchor="middle" style="font-size:8px">80</text>
<text class="rn" x="51" y="448.0" text-anchor="middle" style="font-size:8px">68</text>
<text class="rn" x="51" y="485.0" text-anchor="middle" style="font-size:8px">80</text>
<text class="rn" x="51" y="521.0" text-anchor="middle" style="font-size:8px">80</text>
<text class="rn" x="51" y="556.0" text-anchor="middle" style="font-size:8px">88</text>
<text class="rn" x="51" y="594.0" text-anchor="middle" style="font-size:8px">82</text>
<text class="rn" x="51" y="630.5" text-anchor="middle" style="font-size:8px">88</text>
<text class="rn" x="51" y="667.0" text-anchor="middle" style="font-size:8px">28</text>
<text class="rn" x="51" y="703.3" text-anchor="middle" style="font-size:8px">88</text>
<text class="rn" x="51" y="741.3" text-anchor="middle" style="font-size:8px">88</text>
<text class="rn" x="51" y="778.0" text-anchor="middle" style="font-size:8px">38</text>
<text class="rn" x="51" y="814.6" text-anchor="middle" style="font-size:8px">38</text>
<text class="rn" x="51" y="851.2" text-anchor="middle" style="font-size:8px">38</text>
<text class="rn" x="51" y="887.8" text-anchor="middle" style="font-size:8px">18</text>
<text class="rn" x="51" y="924.5" text-anchor="middle" style="font-size:8px">18</text>
<text class="rn" x="50" y="958.5" text-anchor="middle">0</text>
</svg>
<div id="tools" class="abs"></div>
<svg class="abs" style="left:0;top:75px" width="44" height="922" viewBox="0 75 44 922">
<rect x="0" y="75" width="43" height="13" fill="#3e3e3e"/><rect x="0" y="88" width="43" height="1" fill="#3a3a3a"/><rect x="0" y="120" width="43" height="1" fill="#3c3c3c"/>
<rect x="3" y="81" width="8" height="2" fill="#5a5a5a"/><path d="M33.5 112 l3.4 0 l-1.7 2.6z" fill="#7a7a7a"/>
<path d="M9.5 135.5 h6 l1 1.5 h11.5 v13 h-18.5z" fill="#a9a9a9"/><rect x="10.5" y="138" width="16.5" height="1.3" fill="#6a6a6a"/>
<path d="M32.5 149.5 v3.5 h-3.5z" fill="#bdbdbd"/>
<rect x="9" y="162.6" width="11" height="10" fill="none" stroke="#b4b4b4" stroke-width="1.5"/><rect x="9" y="168.6" width="11" height="9" fill="#b4b4b4"/><rect x="22" y="172.6" width="3" height="2" fill="#b4b4b4"/>
<path d="M32.5 177.1 v3.5 h-3.5z" fill="#bdbdbd"/>
<g transform="translate(18,196.6) rotate(-40)"><rect x="-7" y="-3.25" width="18" height="6.5" rx="3.25" fill="#b4b4b4"/><path d="M-6 -2.95 L-12.5 -1.2 V1.2 L-6 2.95z" fill="#b4b4b4"/></g>
<g transform="translate(18,196.6) rotate(-40)"><rect x="0" y="-1.2" width="7" height="2.4" rx="1.2" fill="#464646"/><rect x="-6" y="-1" width="3" height="2" fill="#464646"/></g>
<path d="M32.5 203.1 v3.5 h-3.5z" fill="#bdbdbd"/>
<g transform="translate(18,222.5) rotate(-40)"><rect x="-7" y="-3.5" width="18" height="7" rx="3.5" fill="#b4b4b4"/><path d="M-6 -3.2 L-12.5 -1.2 V1.2 L-6 3.2z" fill="#b4b4b4"/></g>
<g transform="translate(18,222.5) rotate(-40)"><rect x="0" y="-1.3" width="7.5" height="2.6" rx="1.3" fill="#555"/></g>
<path d="M32.5 229.0 v3.5 h-3.5z" fill="#bdbdbd"/>
<g transform="translate(18,248.5) rotate(-40)"><rect x="-10" y="-3.25" width="20" height="6.5" rx="3.25" fill="none" stroke="#b4b4b4" stroke-width="1.7"/><path d="M-7 0 H4" stroke="#b4b4b4" stroke-width="1.4"/></g>
<path d="M32.5 255.0 v3.5 h-3.5z" fill="#bdbdbd"/>
<rect x="9" y="267.5" width="13" height="12" fill="none" stroke="#b4b4b4" stroke-width="1.6"/><rect x="10" y="272.5" width="6" height="6" fill="#b4b4b4"/><path d="M24 270.5 v10 M22 280.5 h4" stroke="#b4b4b4" stroke-width="1.6"/>
<path d="M32.5 281.0 v3.5 h-3.5z" fill="#bdbdbd"/>
<g transform="translate(18,300.5) rotate(-40)"><rect x="-7" y="-3.5" width="18" height="7" rx="3.5" fill="#b4b4b4"/><path d="M-6 -3.2 L-12.5 -1.2 V1.2 L-6 3.2z" fill="#b4b4b4"/></g>
<g transform="translate(18,300.5) rotate(-40)"><rect x="0" y="-1.3" width="7.5" height="2.6" rx="1.3" fill="#555"/></g>
<path d="M32.5 307.0 v3.5 h-3.5z" fill="#bdbdbd"/>
<rect x="10" y="322" width="16" height="12" fill="none" stroke="#b4b4b4" stroke-width="1.7"/><rect x="11" y="323" width="5" height="10" fill="#b4b4b4"/>
<path d="M32.5 334.5 v3.5 h-3.5z" fill="#bdbdbd"/>
<path d="M12 348 h15 v12 h-17 v-8z" fill="#b4b4b4"/>
<path d="M32.5 360.5 v3.5 h-3.5z" fill="#bdbdbd"/>
<g transform="translate(18,380) rotate(-40)"><rect x="-7" y="-3.5" width="18" height="7" rx="3.5" fill="#b4b4b4"/><path d="M-6 -3.2 L-12.5 -1.2 V1.2 L-6 3.2z" fill="#b4b4b4"/></g>
<g transform="translate(18,380) rotate(-40)"><rect x="0" y="-1.3" width="7.5" height="2.6" rx="1.3" fill="#555"/></g>
<path d="M32.5 386.5 v3.5 h-3.5z" fill="#bdbdbd"/>
<path d="M9 411 l3 -7 l5 -2 l2 -5 l5 1 l-3 7 l-3 6z" fill="#b4b4b4"/>
<path d="M32.5 411.5 v3.5 h-3.5z" fill="#bdbdbd"/>
<g transform="translate(18,428) rotate(-40)"><rect x="-10" y="-3.25" width="20" height="6.5" rx="3.25" fill="none" stroke="#b4b4b4" stroke-width="1.7"/><path d="M-7 0 H4" stroke="#b4b4b4" stroke-width="1.4"/></g>
<path d="M32.5 434.5 v3.5 h-3.5z" fill="#bdbdbd"/>
<path d="M9 462 v-6 h4 v-3 h3 v9z" fill="#b4b4b4"/><path d="M20 462 v-13 h5 v3" stroke="#b4b4b4" stroke-width="1.6" fill="none"/>
<path d="M32.5 462.5 v3.5 h-3.5z" fill="#bdbdbd"/>
<path d="M10 478 h17 a8.5 8 0 0 1 -17 0z" fill="#b4b4b4"/><rect x="17" y="473" width="3" height="5" fill="#b4b4b4"/>
<path d="M32.5 486.5 v3.5 h-3.5z" fill="#bdbdbd"/>
<rect x="9" y="508" width="9" height="6" fill="#b4b4b4"/><rect x="13" y="500" width="9" height="7" fill="#b4b4b4"/><rect x="19" y="505" width="5" height="9" fill="#b4b4b4"/>
<path d="M32.5 514.5 v3.5 h-3.5z" fill="#bdbdbd"/>
<ellipse cx="18" cy="533.5" rx="8" ry="6" transform="rotate(-35 18 533.5)" fill="none" stroke="#b4b4b4" stroke-width="2"/>
<path d="M32.5 540.0 v3.5 h-3.5z" fill="#bdbdbd"/>
<rect x="10" y="554" width="16" height="13" fill="none" stroke="#b4b4b4" stroke-width="1.6"/><path d="M11 566 v-5 l4 -2 l4 3 l6 -4 v8z" fill="#b4b4b4"/>
<path d="M32.5 567.5 v3.5 h-3.5z" fill="#bdbdbd"/>
<rect x="10" y="582.6" width="15" height="10" fill="none" stroke="#b4b4b4" stroke-width="1.6"/><path d="M17.5 579.6 v6 M14 586.6 h5 v3 h-5z" stroke="#b4b4b4" stroke-width="1.2" fill="none"/>
<path d="M32.5 594.1 v3.5 h-3.5z" fill="#bdbdbd"/>
<rect x="0" y="609" width="43" height="1" fill="#3a3a3a"/>
<path d="M13 614 h5" stroke="#aaa" stroke-width="1.2"/>
<rect x="16" y="631" width="21" height="24" fill="#e4e4e4"/>
<rect x="4.75" y="619.75" width="20.5" height="21.5" fill="#464646" stroke="#d0d0d0" stroke-width="1.5"/>
<path d="M17 660 h5 v-2" stroke="#aaa" stroke-width="1.2" fill="none"/>
<rect x="1.5" y="668.5" width="33" height="24" fill="#444" stroke="#3a3a3a"/>
<rect x="11" y="674" width="14" height="13" fill="#bdbdbd"/><circle cx="18.5" cy="681" r="3.2" fill="#3c3c3c"/><rect x="13" y="676" width="3" height="3" fill="#3c3c3c"/>
<circle cx="2.5" cy="544.5" r="1.6" fill="#eee"/>
</svg>
<div id="panel" class="abs">
<div class="abs" style="left:0;top:0;width:241px;height:53px;background:#393939"></div>
<div class="abs" style="left:0;top:10px;width:241px;height:2px;background:#303030"></div>
<div class="abs" style="left:0;top:50px;width:241px;height:2px;background:#313131"></div>
<div class="abs" style="left:-1px;top:0;width:2px;height:922px;background:#333"></div>
<div class="abs" style="left:-13px;top:17px;width:7px;height:2px;background:#777"></div>
<div class="abs" style="left:190px;top:17px;width:8px;height:2px;background:#666"></div><div class="abs" style="left:208px;top:13px;width:33px;height:9px;background:#333"></div>
<div class="abs" style="left:0;top:53px;width:224px;height:29px;background:#3c3c3c"></div>
<div class="abs" style="left:0;top:53px;width:52px;height:29px;background:#484848"></div>
<svg class="abs" style="left:9.5px;top:63.5px" width="40" height="12"><path d="M1 1.5v8 M3.5 1.5v8 M6 1.5v8" stroke="#ddd" stroke-width="1.5"/><rect x="9" y="1.5" width="7" height="8" fill="#ddd"/><path d="M26 1 l9 9 M35 1 l-9 9" stroke="#ddd" stroke-width="1.5"/></svg>
<span class="t" style="left:60px;top:63px;font-size:12.8px;color:#d0d0d0;letter-spacing:-.4px">Feolt lace Gallers</span>
<svg class="abs" style="left:209px;top:64px" width="11" height="11"><path d="M1 1 l8 8 M9 1 l-8 8" stroke="#ccc" stroke-width="1.4"/></svg>
<div class="abs" style="left:0;top:82px;width:224px;height:41px;background:#474747;border-bottom:1px solid #3a3a3a"></div>
<svg class="abs" style="left:8px;top:95px" width="44" height="18"><path d="M1 3.5h14 M1 8.5h10 M1 13.5h14 M13 7v6" stroke="#d4d4d4" stroke-width="1.5" fill="none"/><path d="M28 14 l2 -4 l7 -7 l2 2 l-7 7z" fill="#d4d4d4"/><circle cx="28.5" cy="14" r="1.6" fill="#d4d4d4"/></svg>
<div class="abs" style="left:58px;top:94px;width:87px;height:20px;background:#4f4f4f"></div>
<svg class="abs" style="left:61px;top:98px" width="26" height="12"><path d="M1 1 v10 l7 -5z" fill="#c8c8c8"/><path d="M10 4 l3 4 M13 4 l-3 4 M15 4 l3 4 M18 4 l-3 4" stroke="#b0b0b0" stroke-width="1.2"/></svg>
<span class="t" style="left:87px;top:97px;font-size:13px;color:#d6d6d6;letter-spacing:-.45px;-webkit-text-stroke:.25px #d6d6d6">G;Lagerts</span>
<div class="abs" style="left:149px;top:92px;width:75px;height:24px;background:#3f3f3f"></div>
<span class="t" style="left:154px;top:99px;font-size:10.5px;font-weight:bold;color:#c4c4c4;letter-spacing:-.9px">MCX</span>
<div class="abs" style="left:213px;top:100px;width:6px;height:2px;background:#ccc"></div><div class="abs" style="left:213px;top:105px;width:6px;height:2px;background:#ccc"></div>
<div class="ly" style="top:123px">
<svg class="abs" style="left:1px;top:21px" width="14" height="14"><path d="M2.5 7 l4.5 -4 l4.5 4 l-4.5 4z" fill="none" stroke="#d0d0d0" stroke-width="1.7" stroke-linejoin="round"/></svg>
<svg class="abs" style="left:16px;top:6px" width="44" height="45" viewBox="0 0 44 45"><rect width="44" height="45" fill="#262626"/><rect x="1.2" y="1.2" width="41.6" height="42.6" fill="#e6cdb6"/><rect x="26.3" y="31.7" width="1.1" height="1.1" fill="#fbf3ea" opacity=".7"/><rect x="33.0" y="39.7" width="1.1" height="1.1" fill="#fbf3ea" opacity=".7"/><rect x="30.9" y="38.9" width="1.1" height="1.1" fill="#fbf3ea" opacity=".7"/><rect x="3.1" y="20.6" width="1.1" height="1.1" fill="#fbf3ea" opacity=".7"/><rect x="38.8" y="28.0" width="1.1" height="1.1" fill="#fbf3ea" opacity=".7"/><rect x="37.1" y="6.5" width="1.1" height="1.1" fill="#fbf3ea" opacity=".7"/><rect x="20.3" y="11.9" width="1.1" height="1.1" fill="#fbf3ea" opacity=".7"/><rect x="23.2" y="25.0" width="1.1" height="1.1" fill="#fbf3ea" opacity=".7"/><rect x="2.5" y="10.7" width="1.1" height="1.1" fill="#fbf3ea" opacity=".7"/><rect x="12.9" y="38.7" width="1.1" height="1.1" fill="#fbf3ea" opacity=".7"/><rect x="31.9" y="8.4" width="1.1" height="1.1" fill="#fbf3ea" opacity=".7"/><rect x="33.1" y="7.6" width="1.1" height="1.1" fill="#fbf3ea" opacity=".7"/><rect x="26.1" y="7.1" width="1.1" height="1.1" fill="#fbf3ea" opacity=".7"/><rect x="2.1" y="36.9" width="1.1" height="1.1" fill="#fbf3ea" opacity=".7"/><rect x="10.2" y="10.6" width="1.1" height="1.1" fill="#fbf3ea" opacity=".7"/><rect x="40.3" y="36.9" width="1.1" height="1.1" fill="#fbf3ea" opacity=".7"/><rect x="13.3" y="40.5" width="1.1" height="1.1" fill="#fbf3ea" opacity=".7"/><rect x="23.0" y="29.1" width="1.1" height="1.1" fill="#fbf3ea" opacity=".7"/><rect x="10.0" y="39.6" width="1.1" height="1.1" fill="#fbf3ea" opacity=".7"/><rect x="28.9" y="40.7" width="1.1" height="1.1" fill="#fbf3ea" opacity=".7"/><rect x="36.9" y="14.0" width="1.1" height="1.1" fill="#fbf3ea" opacity=".7"/><rect x="16.1" y="8.6" width="1.1" height="1.1" fill="#fbf3ea" opacity=".7"/><rect x="7.7" y="4.6" width="1.1" height="1.1" fill="#fbf3ea" opacity=".7"/><rect x="13.8" y="26.1" width="1.1" height="1.1" fill="#fbf3ea" opacity=".7"/><rect x="2.1" y="29.1" width="1.1" height="1.1" fill="#fbf3ea" opacity=".7"/><rect x="15.2" y="14.4" width="1.1" height="1.1" fill="#fbf3ea" opacity=".7"/><rect x="33.9" y="21.2" width="1.1" height="1.1" fill="#fbf3ea" opacity=".7"/><rect x="14.3" y="21.2" width="1.1" height="1.1" fill="#fbf3ea" opacity=".7"/><rect x="29.5" y="4.3" width="1.1" height="1.1" fill="#fbf3ea" opacity=".7"/><rect x="40.0" y="2.9" width="1.1" height="1.1" fill="#fbf3ea" opacity=".7"/><rect x="31.2" y="35.8" width="1.1" height="1.1" fill="#fbf3ea" opacity=".7"/><rect x="2.7" y="33.5" width="1.1" height="1.1" fill="#fbf3ea" opacity=".7"/><rect x="16.3" y="25.1" width="1.1" height="1.1" fill="#fbf3ea" opacity=".7"/><rect x="2.4" y="3.9" width="1.1" height="1.1" fill="#fbf3ea" opacity=".7"/><rect x="9.1" y="40.2" width="1.1" height="1.1" fill="#fbf3ea" opacity=".7"/><rect x="9.7" y="32.2" width="1.1" height="1.1" fill="#fbf3ea" opacity=".7"/><rect x="38.3" y="39.7" width="1.1" height="1.1" fill="#fbf3ea" opacity=".7"/><rect x="15.4" y="16.2" width="1.1" height="1.1" fill="#fbf3ea" opacity=".7"/><rect x="22.5" y="33.0" width="1.1" height="1.1" fill="#fbf3ea" opacity=".7"/><rect x="6.2" y="31.9" width="1.1" height="1.1" fill="#fbf3ea" opacity=".7"/><rect x="33.1" y="36.4" width="1.1" height="1.1" fill="#fbf3ea" opacity=".7"/><rect x="3.4" y="39.8" width="1.1" height="1.1" fill="#fbf3ea" opacity=".7"/><rect x="5.6" y="15.6" width="1.1" height="1.1" fill="#fbf3ea" opacity=".7"/><rect x="25.8" y="38.7" width="1.1" height="1.1" fill="#fbf3ea" opacity=".7"/><rect x="15.3" y="39.0" width="1.1" height="1.1" fill="#fbf3ea" opacity=".7"/><rect x="23.3" y="14.5" width="1.1" height="1.1" fill="#fbf3ea" opacity=".7"/><rect x="14.4" y="9.1" width="1.1" height="1.1" fill="#fbf3ea" opacity=".7"/><rect x="5.0" y="8.0" width="1.1" height="1.1" fill="#fbf3ea" opacity=".7"/><rect x="28.9" y="41.9" width="1.1" height="1.1" fill="#fbf3ea" opacity=".7"/><rect x="8.3" y="3.9" width="1.1" height="1.1" fill="#fbf3ea" opacity=".7"/><rect x="40.5" y="23.3" width="1.1" height="1.1" fill="#fbf3ea" opacity=".7"/><rect x="17.8" y="11.5" width="1.1" height="1.1" fill="#fbf3ea" opacity=".7"/><rect x="25.2" y="35.1" width="1.1" height="1.1" fill="#fbf3ea" opacity=".7"/><rect x="19.8" y="18.9" width="1.1" height="1.1" fill="#fbf3ea" opacity=".7"/><rect x="4.2" y="38.6" width="1.1" height="1.1" fill="#fbf3ea" opacity=".7"/><rect x="3.3" y="21.7" width="1.1" height="1.1" fill="#fbf3ea" opacity=".7"/><rect x="34.7" y="7.2" width="1.1" height="1.1" fill="#fbf3ea" opacity=".7"/><rect x="30.5" y="40.0" width="1.1" height="1.1" fill="#fbf3ea" opacity=".7"/><rect x="26.6" y="33.5" width="1.1" height="1.1" fill="#fbf3ea" opacity=".7"/><rect x="6.2" y="19.4" width="1.1" height="1.1" fill="#fbf3ea" opacity=".7"/><rect x="7.8" y="35.8" width="1.1" height="1.1" fill="#fbf3ea" opacity=".7"/><rect x="13.5" y="20.1" width="1.1" height="1.1" fill="#fbf3ea" opacity=".7"/><rect x="41.0" y="36.1" width="1.1" height="1.1" fill="#fbf3ea" opacity=".7"/><rect x="40.1" y="20.1" width="1.1" height="1.1" fill="#fbf3ea" opacity=".7"/><rect x="21.0" y="31.2" width="1.1" height="1.1" fill="#fbf3ea" opacity=".7"/><rect x="20.7" y="13.6" width="1.1" height="1.1" fill="#fbf3ea" opacity=".7"/><rect x="17.7" y="7.9" width="1.1" height="1.1" fill="#fbf3ea" opacity=".7"/><rect x="16.7" y="41.5" width="1.1" height="1.1" fill="#fbf3ea" opacity=".7"/><rect x="39.4" y="27.1" width="1.1" height="1.1" fill="#fbf3ea" opacity=".7"/><rect x="21.5" y="15.5" width="1.1" height="1.1" fill="#fbf3ea" opacity=".7"/><rect x="5.5" y="12.9" width="1.1" height="1.1" fill="#fbf3ea" opacity=".7"/><rect x="32.5" y="36.7" width="1.1" height="1.1" fill="#fbf3ea" opacity=".7"/><rect x="16.1" y="33.4" width="1.1" height="1.1" fill="#fbf3ea" opacity=".7"/><rect x="32.2" y="29.8" width="1.1" height="1.1" fill="#fbf3ea" opacity=".7"/><rect x="27.9" y="32.4" width="1.1" height="1.1" fill="#fbf3ea" opacity=".7"/><rect x="16.2" y="30.2" width="1.1" height="1.1" fill="#fbf3ea" opacity=".7"/><rect x="13.0" y="21.4" width="1.1" height="1.1" fill="#fbf3ea" opacity=".7"/><rect x="32.0" y="29.6" width="1.1" height="1.1" fill="#fbf3ea" opacity=".7"/><rect x="13.5" y="39.8" width="1.1" height="1.1" fill="#fbf3ea" opacity=".7"/><rect x="27.3" y="25.2" width="1.1" height="1.1" fill="#fbf3ea" opacity=".7"/><rect x="2.5" y="23.9" width="1.1" height="1.1" fill="#fbf3ea" opacity=".7"/><rect x="11.8" y="28.9" width="1.1" height="1.1" fill="#fbf3ea" opacity=".7"/><rect x="20.1" y="34.7" width="1.1" height="1.1" fill="#fbf3ea" opacity=".7"/><rect x="27.3" y="33.9" width="1.1" height="1.1" fill="#fbf3ea" opacity=".7"/><rect x="15.6" y="27.8" width="1.1" height="1.1" fill="#fbf3ea" opacity=".7"/><rect x="30.8" y="35.1" width="1.1" height="1.1" fill="#fbf3ea" opacity=".7"/><rect x="15.7" y="35.7" width="1.1" height="1.1" fill="#fbf3ea" opacity=".7"/><rect x="35.9" y="29.5" width="1.1" height="1.1" fill="#fbf3ea" opacity=".7"/><rect x="40.1" y="40.3" width="1.1" height="1.1" fill="#fbf3ea" opacity=".7"/><rect x="22.2" y="23.2" width="1.1" height="1.1" fill="#fbf3ea" opacity=".7"/><rect x="8.5" y="35.5" width="1.1" height="1.1" fill="#fbf3ea" opacity=".7"/><rect x="38.6" y="21.1" width="1.1" height="1.1" fill="#fbf3ea" opacity=".7"/><rect x="29.0" y="30.8" width="1.1" height="1.1" fill="#fbf3ea" opacity=".7"/><rect x="30.5" y="8.9" width="1.1" height="1.1" fill="#fbf3ea" opacity=".7"/><rect x="32.4" y="25.2" width="1.1" height="1.1" fill="#fbf3ea" opacity=".7"/><rect x="28.0" y="18.8" width="1.1" height="1.1" fill="#fbf3ea" opacity=".7"/><rect x="26.3" y="33.0" width="1.1" height="1.1" fill="#fbf3ea" opacity=".7"/><rect x="26.8" y="30.8" width="1.1" height="1.1" fill="#fbf3ea" opacity=".7"/><rect x="3.1" y="8.4" width="1.1" height="1.1" fill="#fbf3ea" opacity=".7"/><rect x="19.2" y="28.0" width="1.1" height="1.1" fill="#fbf3ea" opacity=".7"/><rect x="10.5" y="29.4" width="1.1" height="1.1" fill="#fbf3ea" opacity=".7"/><rect x="26.6" y="3.7" width="1.1" height="1.1" fill="#fbf3ea" opacity=".7"/><rect x="20.4" y="11.0" width="1.1" height="1.1" fill="#fbf3ea" opacity=".7"/><rect x="4.1" y="7.3" width="1.1" height="1.1" fill="#fbf3ea" opacity=".7"/><rect x="14.4" y="9.3" width="1.1" height="1.1" fill="#fbf3ea" opacity=".7"/><rect x="9.5" y="3.4" width="1.1" height="1.1" fill="#fbf3ea" opacity=".7"/><rect x="20.1" y="17.2" width="1.1" height="1.1" fill="#fbf3ea" opacity=".7"/><rect x="25.9" y="25.6" width="1.1" height="1.1" fill="#fbf3ea" opacity=".7"/><rect x="11.3" y="38.1" width="1.1" height="1.1" fill="#fbf3ea" opacity=".7"/><rect x="2.0" y="18.2" width="1.1" height="1.1" fill="#fbf3ea" opacity=".7"/><path d="M17.5 6.5 h8 l2 3.5 l7 4 l3.5 14 l1 15.5 h-35 l1 -15.5 l3.5 -14 l7 -4z" fill="#e6c6a6" stroke="#a89880" stroke-width=".5" stroke-dasharray="1.5 1"/><path d="M18.5 8 l3 17 l3.5 -17z" fill="#f4ecdd"/><path d="M21.5 25 V43" stroke="#c9b79c" stroke-width=".5"/><rect x="18" y="3.5" width="7" height="2.5" fill="#555"/></svg>
<span class="t">Front Lace Garment</span>
</div>
<div class="ly" style="top:179px">
<svg class="abs" style="left:1px;top:21px" width="14" height="14"><path d="M2.5 7 l4.5 -4 l4.5 4 l-4.5 4z" fill="none" stroke="#d0d0d0" stroke-width="1.7" stroke-linejoin="round"/></svg>
<svg class="abs" style="left:16px;top:6px" width="44" height="45" viewBox="0 0 44 45"><rect width="44" height="45" fill="#262626"/><rect x="1.2" y="1.2" width="41.6" height="42.6" fill="#e9e8e5"/><rect x="32.9" y="34.9" width="1.1" height="1.1" fill="#cfc6b4" opacity=".7"/><rect x="20.9" y="12.5" width="1.1" height="1.1" fill="#cfc6b4" opacity=".7"/><rect x="2.0" y="28.5" width="1.1" height="1.1" fill="#cfc6b4" opacity=".7"/><rect x="20.3" y="32.4" width="1.1" height="1.1" fill="#cfc6b4" opacity=".7"/><rect x="16.6" y="32.8" width="1.1" height="1.1" fill="#cfc6b4" opacity=".7"/><rect x="12.6" y="34.1" width="1.1" height="1.1" fill="#cfc6b4" opacity=".7"/><rect x="30.5" y="18.6" width="1.1" height="1.1" fill="#cfc6b4" opacity=".7"/><rect x="23.0" y="29.3" width="1.1" height="1.1" fill="#cfc6b4" opacity=".7"/><rect x="9.5" y="24.1" width="1.1" height="1.1" fill="#cfc6b4" opacity=".7"/><rect x="33.4" y="12.6" width="1.1" height="1.1" fill="#cfc6b4" opacity=".7"/><rect x="33.3" y="29.4" width="1.1" height="1.1" fill="#cfc6b4" opacity=".7"/><rect x="34.9" y="15.4" width="1.1" height="1.1" fill="#cfc6b4" opacity=".7"/><rect x="5.6" y="34.0" width="1.1" height="1.1" fill="#cfc6b4" opacity=".7"/><rect x="33.4" y="19.8" width="1.1" height="1.1" fill="#cfc6b4" opacity=".7"/><rect x="5.7" y="9.9" width="1.1" height="1.1" fill="#cfc6b4" opacity=".7"/><rect x="26.8" y="13.6" width="1.1" height="1.1" fill="#cfc6b4" opacity=".7"/><rect x="39.1" y="25.5" width="1.1" height="1.1" fill="#cfc6b4" opacity=".7"/><rect x="9.8" y="28.2" width="1.1" height="1.1" fill="#cfc6b4" opacity=".7"/><rect x="16.1" y="39.3" width="1.1" height="1.1" fill="#cfc6b4" opacity=".7"/><rect x="37.5" y="22.6" width="1.1" height="1.1" fill="#cfc6b4" opacity=".7"/><rect x="27.1" y="29.9" width="1.1" height="1.1" fill="#cfc6b4" opacity=".7"/><rect x="33.4" y="41.1" width="1.1" height="1.1" fill="#cfc6b4" opacity=".7"/><rect x="3.1" y="16.5" width="1.1" height="1.1" fill="#cfc6b4" opacity=".7"/><rect x="25.5" y="14.2" width="1.1" height="1.1" fill="#cfc6b4" opacity=".7"/><rect x="25.0" y="5.6" width="1.1" height="1.1" fill="#cfc6b4" opacity=".7"/><rect x="36.3" y="23.0" width="1.1" height="1.1" fill="#cfc6b4" opacity=".7"/><rect x="6.6" y="28.5" width="1.1" height="1.1" fill="#cfc6b4" opacity=".7"/><rect x="14.2" y="9.8" width="1.1" height="1.1" fill="#cfc6b4" opacity=".7"/><rect x="20.9" y="7.5" width="1.1" height="1.1" fill="#cfc6b4" opacity=".7"/><rect x="10.2" y="36.6" width="1.1" height="1.1" fill="#cfc6b4" opacity=".7"/><rect x="29.2" y="2.5" width="1.1" height="1.1" fill="#cfc6b4" opacity=".7"/><rect x="32.3" y="2.7" width="1.1" height="1.1" fill="#cfc6b4" opacity=".7"/><rect x="15.0" y="38.2" width="1.1" height="1.1" fill="#cfc6b4" opacity=".7"/><rect x="26.2" y="14.2" width="1.1" height="1.1" fill="#cfc6b4" opacity=".7"/><rect x="16.7" y="17.6" width="1.1" height="1.1" fill="#cfc6b4" opacity=".7"/><rect x="6.9" y="42.0" width="1.1" height="1.1" fill="#cfc6b4" opacity=".7"/><rect x="4.1" y="18.9" width="1.1" height="1.1" fill="#cfc6b4" opacity=".7"/><rect x="31.1" y="17.9" width="1.1" height="1.1" fill="#cfc6b4" opacity=".7"/><rect x="40.3" y="11.8" width="1.1" height="1.1" fill="#cfc6b4" opacity=".7"/><rect x="40.2" y="37.7" width="1.1" height="1.1" fill="#cfc6b4" opacity=".7"/><rect x="28.1" y="37.6" width="1.1" height="1.1" fill="#cfc6b4" opacity=".7"/><rect x="19.4" y="35.3" width="1.1" height="1.1" fill="#cfc6b4" opacity=".7"/><rect x="33.0" y="22.7" width="1.1" height="1.1" fill="#cfc6b4" opacity=".7"/><rect x="20.4" y="30.2" width="1.1" height="1.1" fill="#cfc6b4" opacity=".7"/><rect x="18.0" y="5.4" width="1.1" height="1.1" fill="#cfc6b4" opacity=".7"/><rect x="31.1" y="12.6" width="1.1" height="1.1" fill="#cfc6b4" opacity=".7"/><rect x="21.0" y="33.4" width="1.1" height="1.1" fill="#cfc6b4" opacity=".7"/><rect x="8.7" y="2.9" width="1.1" height="1.1" fill="#cfc6b4" opacity=".7"/><rect x="6.8" y="25.6" width="1.1" height="1.1" fill="#cfc6b4" opacity=".7"/><rect x="16.1" y="12.3" width="1.1" height="1.1" fill="#cfc6b4" opacity=".7"/><rect x="19.6" y="39.1" width="1.1" height="1.1" fill="#cfc6b4" opacity=".7"/><rect x="11.9" y="18.4" width="1.1" height="1.1" fill="#cfc6b4" opacity=".7"/><rect x="36.3" y="26.5" width="1.1" height="1.1" fill="#cfc6b4" opacity=".7"/><rect x="12.4" y="21.0" width="1.1" height="1.1" fill="#cfc6b4" opacity=".7"/><rect x="20.7" y="7.7" width="1.1" height="1.1" fill="#cfc6b4" opacity=".7"/><rect x="16.7" y="14.2" width="1.1" height="1.1" fill="#cfc6b4" opacity=".7"/><rect x="33.4" y="14.9" width="1.1" height="1.1" fill="#cfc6b4" opacity=".7"/><rect x="27.7" y="40.8" width="1.1" height="1.1" fill="#cfc6b4" opacity=".7"/><rect x="38.0" y="17.0" width="1.1" height="1.1" fill="#cfc6b4" opacity=".7"/><rect x="25.5" y="14.8" width="1.1" height="1.1" fill="#cfc6b4" opacity=".7"/><path d="M17.5 6.5 h8 l2 3.5 l7 4 l3.5 14 l1 15.5 h-35 l1 -15.5 l3.5 -14 l7 -4z" fill="#ecdfc6" stroke="#a89880" stroke-width=".5" stroke-dasharray="1.5 1"/><path d="M18.5 8 l3 17 l3.5 -17z" fill="#f4ecdd"/><path d="M21.5 25 V43" stroke="#c9b79c" stroke-width=".5"/><rect x="18" y="3.5" width="7" height="2.5" fill="#555"/></svg>
<span class="t">Inner Neck Shot</span>
<svg class="abs" style="left:201px;top:21px" width="14" height="14"><circle cx="7" cy="7" r="4" fill="#6e6e6e" stroke="#c8c8c8" stroke-width="2.2"/></svg>
</div>
<div class="ly" style="top:235px">
<svg class="abs" style="left:1px;top:21px" width="14" height="14"><path d="M2.5 7 l4.5 -4 l4.5 4 l-4.5 4z" fill="none" stroke="#d0d0d0" stroke-width="1.7" stroke-linejoin="round"/></svg>
<svg class="abs" style="left:16px;top:6px" width="44" height="45" viewBox="0 0 44 45"><rect width="44" height="45" fill="#262626"/><rect x="1.2" y="1.2" width="41.6" height="42.6" fill="#e9e8e5"/><rect x="14.6" y="8.0" width="1.1" height="1.1" fill="#cfc6b4" opacity=".7"/><rect x="27.4" y="4.9" width="1.1" height="1.1" fill="#cfc6b4" opacity=".7"/><rect x="22.9" y="16.6" width="1.1" height="1.1" fill="#cfc6b4" opacity=".7"/><rect x="4.3" y="22.3" width="1.1" height="1.1" fill="#cfc6b4" opacity=".7"/><rect x="3.5" y="19.3" width="1.1" height="1.1" fill="#cfc6b4" opacity=".7"/><rect x="4.7" y="5.6" width="1.1" height="1.1" fill="#cfc6b4" opacity=".7"/><rect x="18.6" y="35.1" width="1.1" height="1.1" fill="#cfc6b4" opacity=".7"/><rect x="6.8" y="10.9" width="1.1" height="1.1" fill="#cfc6b4" opacity=".7"/><rect x="26.5" y="39.9" width="1.1" height="1.1" fill="#cfc6b4" opacity=".7"/><rect x="24.5" y="17.9" width="1.1" height="1.1" fill="#cfc6b4" opacity=".7"/><rect x="40.1" y="3.9" width="1.1" height="1.1" fill="#cfc6b4" opacity=".7"/><rect x="35.5" y="13.6" width="1.1" height="1.1" fill="#cfc6b4" opacity=".7"/><rect x="7.6" y="6.7" width="1.1" height="1.1" fill="#cfc6b4" opacity=".7"/><rect x="14.0" y="34.6" width="1.1" height="1.1" fill="#cfc6b4" opacity=".7"/><rect x="9.0" y="25.3" width="1.1" height="1.1" fill="#cfc6b4" opacity=".7"/><rect x="26.9" y="16.9" width="1.1" height="1.1" fill="#cfc6b4" opacity=".7"/><rect x="23.4" y="4.5" width="1.1" height="1.1" fill="#cfc6b4" opacity=".7"/><rect x="4.3" y="10.2" width="1.1" height="1.1" fill="#cfc6b4" opacity=".7"/><rect x="28.5" y="19.1" width="1.1" height="1.1" fill="#cfc6b4" opacity=".7"/><rect x="14.3" y="25.4" width="1.1" height="1.1" fill="#cfc6b4" opacity=".7"/><rect x="19.7" y="14.0" width="1.1" height="1.1" fill="#cfc6b4" opacity=".7"/><rect x="33.0" y="30.0" width="1.1" height="1.1" fill="#cfc6b4" opacity=".7"/><rect x="11.5" y="25.0" width="1.1" height="1.1" fill="#cfc6b4" opacity=".7"/><rect x="22.5" y="37.0" width="1.1" height="1.1" fill="#cfc6b4" opacity=".7"/><rect x="30.4" y="13.5" width="1.1" height="1.1" fill="#cfc6b4" opacity=".7"/><rect x="40.2" y="6.7" width="1.1" height="1.1" fill="#cfc6b4" opacity=".7"/><rect x="18.3" y="32.3" width="1.1" height="1.1" fill="#cfc6b4" opacity=".7"/><rect x="7.9" y="21.6" width="1.1" height="1.1" fill="#cfc6b4" opacity=".7"/><rect x="3.5" y="28.7" width="1.1" height="1.1" fill="#cfc6b4" opacity=".7"/><rect x="31.8" y="24.9" width="1.1" height="1.1" fill="#cfc6b4" opacity=".7"/><rect x="36.1" y="14.5" width="1.1" height="1.1" fill="#cfc6b4" opacity=".7"/><rect x="29.1" y="25.8" width="1.1" height="1.1" fill="#cfc6b4" opacity=".7"/><rect x="24.6" y="20.2" width="1.1" height="1.1" fill="#cfc6b4" opacity=".7"/><rect x="34.8" y="39.8" width="1.1" height="1.1" fill="#cfc6b4" opacity=".7"/><rect x="20.5" y="28.6" width="1.1" height="1.1" fill="#cfc6b4" opacity=".7"/><rect x="4.4" y="30.1" width="1.1" height="1.1" fill="#cfc6b4" opacity=".7"/><rect x="27.2" y="41.7" width="1.1" height="1.1" fill="#cfc6b4" opacity=".7"/><rect x="34.1" y="13.4" width="1.1" height="1.1" fill="#cfc6b4" opacity=".7"/><rect x="17.0" y="28.7" width="1.1" height="1.1" fill="#cfc6b4" opacity=".7"/><rect x="2.9" y="20.5" width="1.1" height="1.1" fill="#cfc6b4" opacity=".7"/><rect x="8.6" y="6.7" width="1.1" height="1.1" fill="#cfc6b4" opacity=".7"/><rect x="4.3" y="32.7" width="1.1" height="1.1" fill="#cfc6b4" opacity=".7"/><rect x="7.0" y="11.9" width="1.1" height="1.1" fill="#cfc6b4" opacity=".7"/><rect x="17.2" y="36.9" width="1.1" height="1.1" fill="#cfc6b4" opacity=".7"/><rect x="5.1" y="20.0" width="1.1" height="1.1" fill="#cfc6b4" opacity=".7"/><rect x="23.4" y="37.3" width="1.1" height="1.1" fill="#cfc6b4" opacity=".7"/><rect x="34.0" y="36.6" width="1.1" height="1.1" fill="#cfc6b4" opacity=".7"/><rect x="12.9" y="18.6" width="1.1" height="1.1" fill="#cfc6b4" opacity=".7"/><rect x="16.0" y="37.4" width="1.1" height="1.1" fill="#cfc6b4" opacity=".7"/><rect x="39.4" y="8.0" width="1.1" height="1.1" fill="#cfc6b4" opacity=".7"/><rect x="8.9" y="11.3" width="1.1" height="1.1" fill="#cfc6b4" opacity=".7"/><rect x="11.1" y="21.4" width="1.1" height="1.1" fill="#cfc6b4" opacity=".7"/><rect x="25.0" y="12.5" width="1.1" height="1.1" fill="#cfc6b4" opacity=".7"/><rect x="2.2" y="18.8" width="1.1" height="1.1" fill="#cfc6b4" opacity=".7"/><rect x="16.4" y="24.7" width="1.1" height="1.1" fill="#cfc6b4" opacity=".7"/><rect x="39.2" y="29.6" width="1.1" height="1.1" fill="#cfc6b4" opacity=".7"/><rect x="22.1" y="26.7" width="1.1" height="1.1" fill="#cfc6b4" opacity=".7"/><rect x="28.4" y="4.2" width="1.1" height="1.1" fill="#cfc6b4" opacity=".7"/><rect x="37.1" y="33.2" width="1.1" height="1.1" fill="#cfc6b4" opacity=".7"/><rect x="36.1" y="33.9" width="1.1" height="1.1" fill="#cfc6b4" opacity=".7"/><path d="M17.5 6.5 h8 l2 3.5 l7 4 l3.5 14 l1 15.5 h-35 l1 -15.5 l3.5 -14 l7 -4z" fill="#ecdfc6" stroke="#a89880" stroke-width=".5" stroke-dasharray="1.5 1"/><path d="M18.5 8 l3 17 l3.5 -17z" fill="#f4ecdd"/><path d="M21.5 25 V43" stroke="#c9b79c" stroke-width=".5"/><rect x="18" y="3.5" width="7" height="2.5" fill="#555"/></svg>
<span class="t">Inner Neck Shot</span>
<svg class="abs" style="left:201px;top:21px" width="14" height="14"><circle cx="7" cy="7" r="4" fill="#6e6e6e" stroke="#c8c8c8" stroke-width="2.2"/></svg>
</div>
<div class="abs" style="left:224px;top:53px;width:17px;height:869px;background:#3e3e3e"></div>
<div class="abs" style="left:226px;top:67px;width:15px;height:840px;background:#474747"></div>
<div class="abs" style="left:0;top:898px;width:224px;height:24px;background:#464646;border-top:1px solid #3a3a3a"></div>
<svg class="abs" style="left:40px;top:900px" width="180" height="22" viewBox="823 975 180 22">
<path d="M833 980 h5 l1 2 h7 v9 h-13z" fill="#c6c6c6"/><rect x="838" y="984" width="6" height="5" fill="#666"/>
<path d="M863 991 l2 -8 h3 l1 -3 h4 l-1 5 l2 6z" fill="#c6c6c6"/><path d="M868 984 v6" stroke="#555"/>
<circle cx="898" cy="985.5" r="5.5" fill="#c6c6c6"/><circle cx="898" cy="985.5" r="2" fill="#555"/><path d="M898 979v2M898 990v2M892 985.5h2M902 985.5h2" stroke="#464646" stroke-width="1.5"/>
<rect x="921" y="980" width="13" height="4" fill="#c6c6c6"/><rect x="921" y="986" width="13" height="5" fill="#c6c6c6"/><rect x="927" y="981" width="4" height="2" fill="#555"/>
<rect x="951" y="980" width="12" height="11" fill="#c6c6c6"/><rect x="953" y="982" width="4" height="7" fill="#444"/>
<rect x="982" y="980" width="11" height="11" rx="1.5" fill="#c6c6c6"/><rect x="984.5" y="982.5" width="6" height="6" fill="#4a4a4a"/>
</svg>
</div>
<div class="abs" style="left:43px;top:986px;width:740px;height:11px;background:#373737"></div>
<div class="abs" style="left:45px;top:980px;width:217px;height:17px;background:#444"></div>
<div class="abs" style="left:105px;top:980px;width:1px;height:17px;background:#383838"></div>
<span class="t" style="left:61px;top:984px;font-size:9px;color:#bdbdbd;letter-spacing:-.3px">IREONS</span>
<span class="t" style="left:112px;top:984px;font-size:9px;color:#bdbdbd;letter-spacing:-.25px">RIANS RSMSRT · 1C9 134K</span>
<svg class="abs" style="left:246px;top:985px" width="10" height="8"><path d="M1 1 h7 l-3.5 5z" fill="#999"/></svg>
<div id="status" class="abs">
<span class="t" style="left:46px;top:8px;font-size:14.5px;color:#d4d4d4;letter-spacing:-.4px;-webkit-text-stroke:.2px #d4d4d4">Adobe:V25%</span>
<div class="abs" style="left:238px;top:2px;width:1px;height:22px;background:#383838"></div><div class="abs" style="left:250px;top:2px;width:1px;height:22px;background:#383838"></div>
<svg class="abs" style="left:259px;top:7px" width="12" height="15"><path d="M1 1 h6 l4 4 v9 h-10z" fill="#cfcfcf"/></svg>
<span class="t" style="left:281px;top:8px;font-size:14.5px;color:#d4d4d4;letter-spacing:-.1px;-webkit-text-stroke:.2px #d4d4d4">Caetnell:/8/121 235.x v25.x</span>
<svg class="abs" style="left:815px;top:4px" width="200" height="24" viewBox="815 1000 200 24">
<path d="M827 1004 l-6 11 l5 -2 l1 4 l1 -4 l5 2z" fill="none" stroke="#d0d0d0" stroke-width="1.5"/>
<path d="M852 1008 h10 v9 h-10z M855 1008 v-2 h4 v2 M857 1008 v9" fill="none" stroke="#d0d0d0" stroke-width="1.4"/>
<rect x="880.5" y="1006.5" width="13" height="11" rx="1" fill="none" stroke="#d0d0d0" stroke-width="1.5"/><path d="M878 1012 h3" stroke="#d0d0d0" stroke-width="1.5"/>
<circle cx="904" cy="1012" r="4" fill="none" stroke="#d0d0d0" stroke-width="1.4"/><circle cx="904" cy="1012" r="1.2" fill="#d0d0d0"/>
<text x="915" y="1015" style="font-size:8px;fill:#aaa;font-family:'Liberation Sans',sans-serif">CH</text>
<text x="936" y="1009" style="font-size:11.5px;font-weight:bold;letter-spacing:-.3px;fill:#d0d0d0;font-family:'Liberation Sans',sans-serif">- 65.7%</text>
<text x="936" y="1023" style="font-size:11.5px;font-weight:bold;letter-spacing:-.3px;fill:#d0d0d0;font-family:'Liberation Sans',sans-serif">2 P28425</text>
</svg>
</div>
</body></html>
